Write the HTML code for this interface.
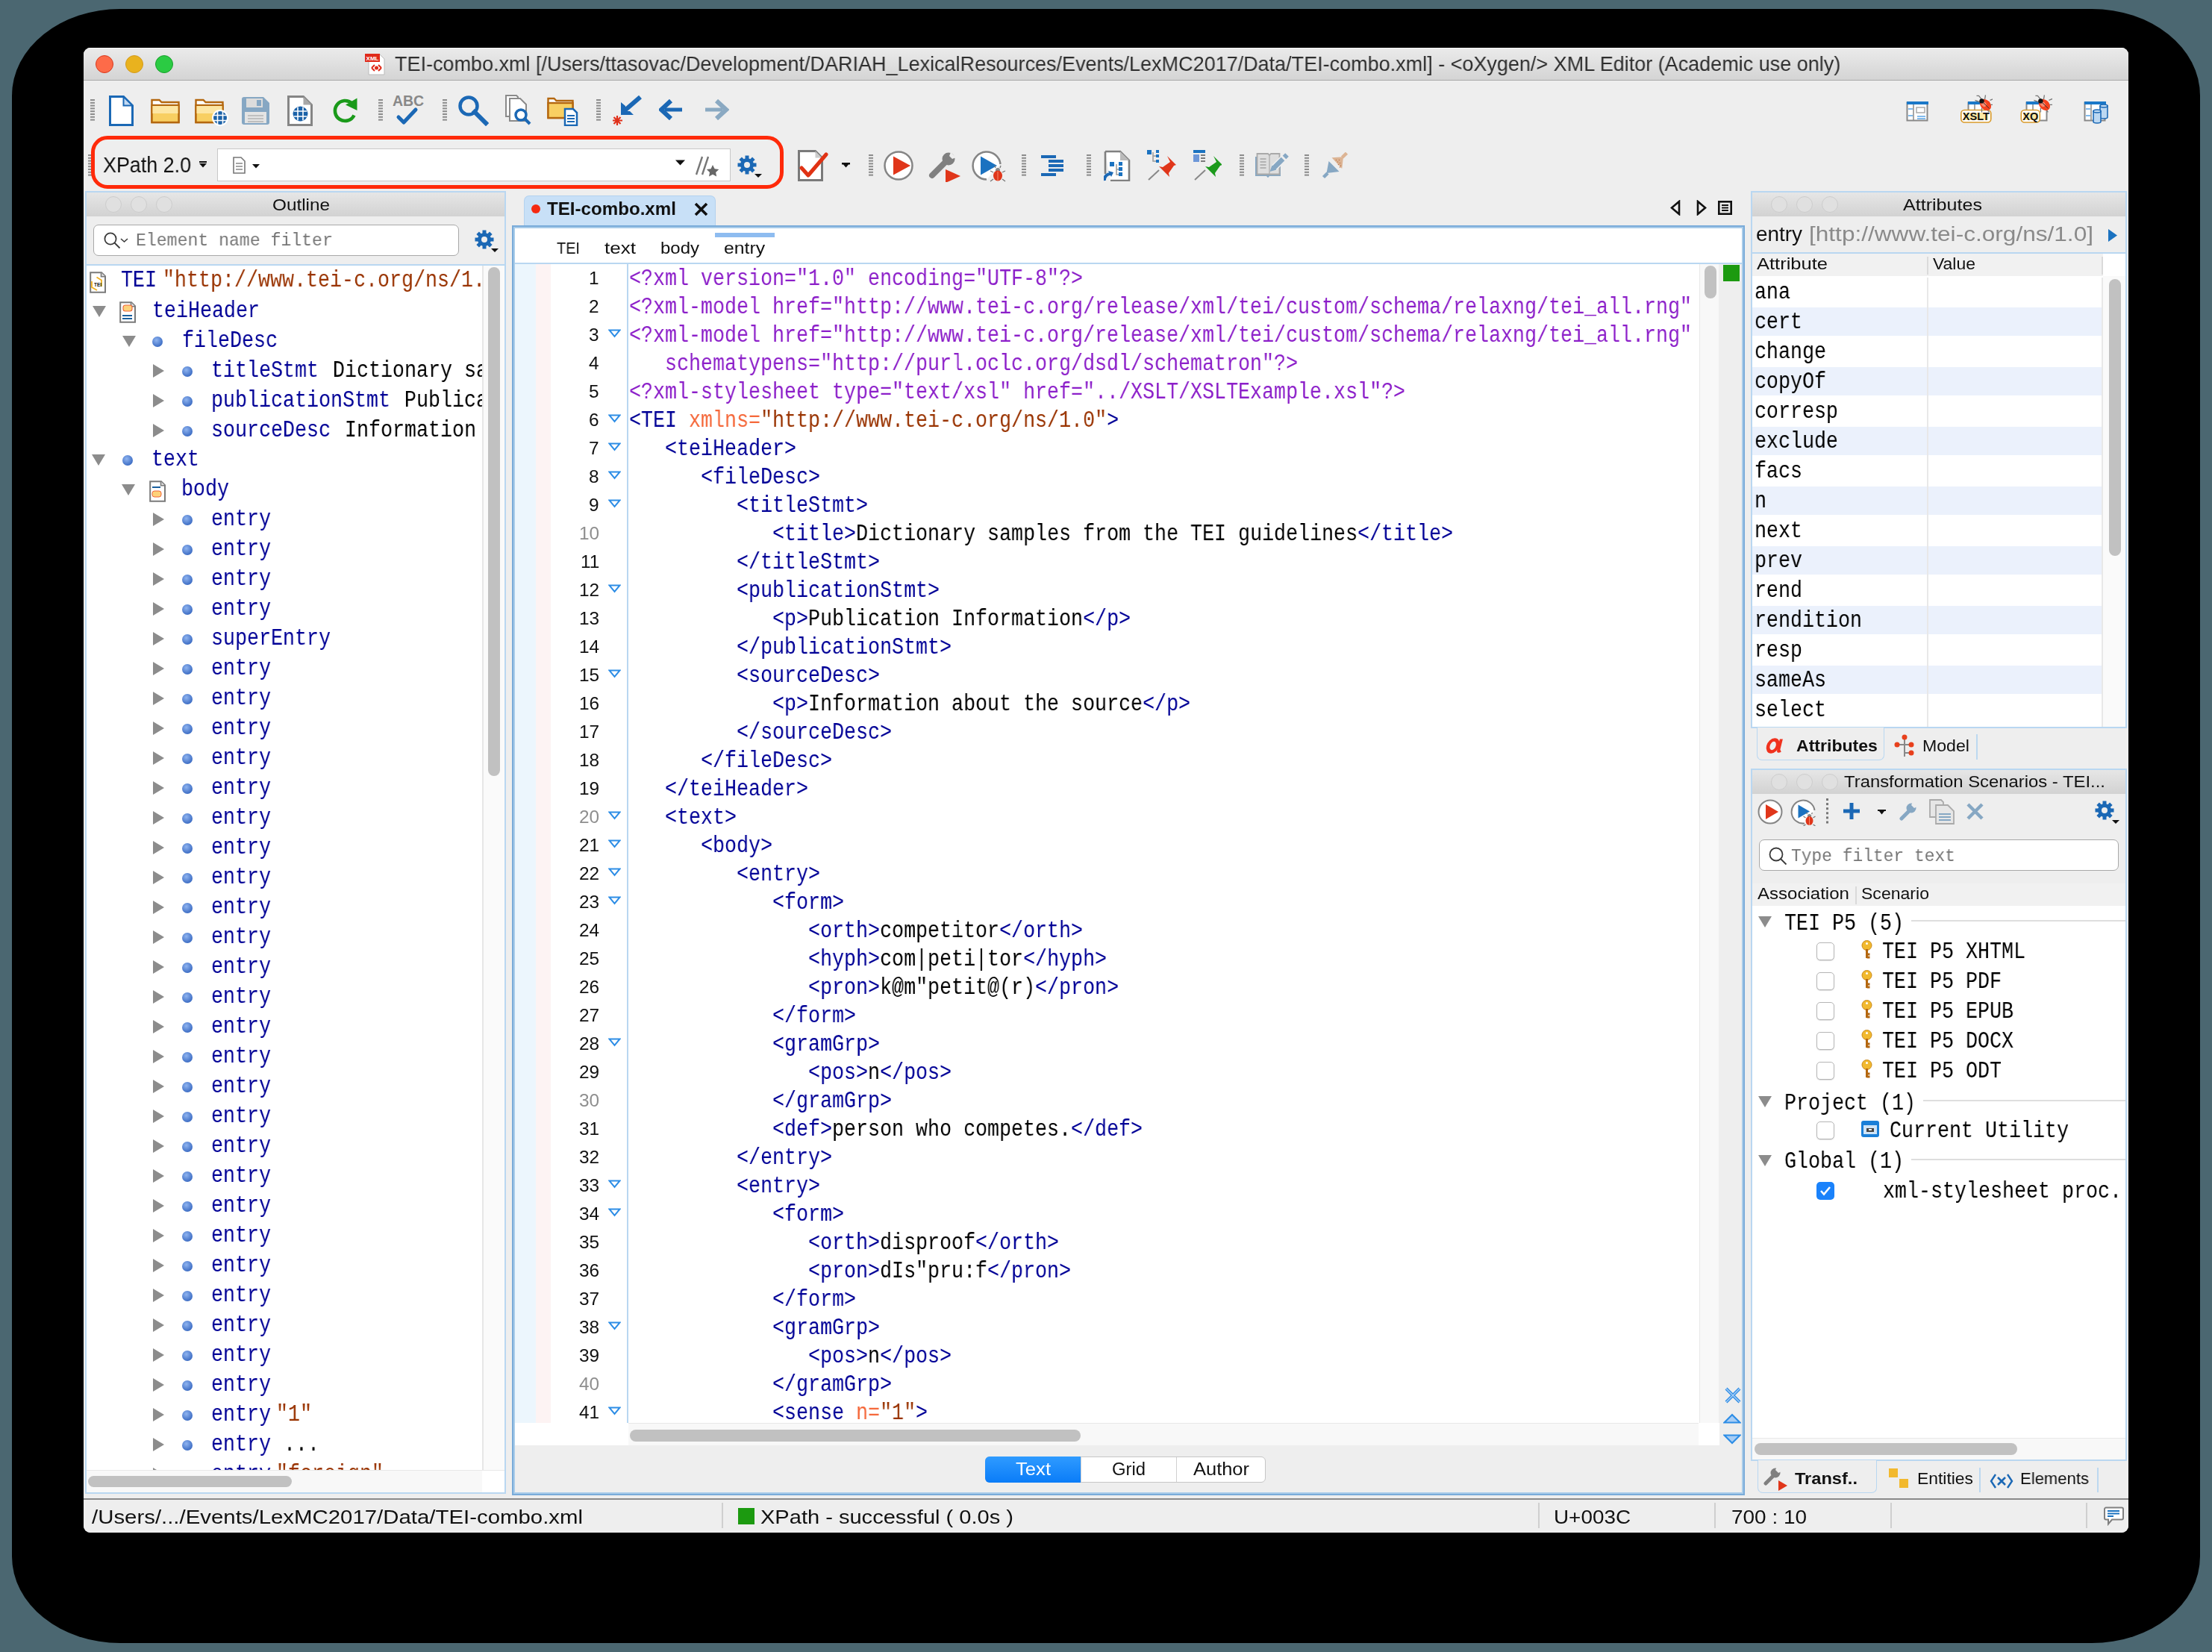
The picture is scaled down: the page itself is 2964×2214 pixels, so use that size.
<!DOCTYPE html><html><head><meta charset="utf-8"><title>oXygen XML Editor</title><style>
html,body{margin:0;padding:0}
body{width:2964px;height:2214px;overflow:hidden;position:relative;background:#4b6771;font-family:"Liberation Sans",sans-serif}
.r{position:absolute;box-sizing:border-box}
.t{position:absolute;white-space:pre;transform-origin:0 0;will-change:transform}
.clip{position:absolute;overflow:hidden}
</style></head><body>
<div class="r" style="left:16px;top:12px;width:2932px;height:2190px;background:#000;border-radius:145px/116px"></div>
<div style="position:absolute;left:0;top:0;width:2964px;height:2214px;clip-path:inset(64px 112px 160px 112px round 9px);background:#eeeeee">
<div class="r" style="left:112px;top:64px;width:2740px;height:44px;background:linear-gradient(#ebebeb,#d4d4d4);border-bottom:1.5px solid #a9a9a9;box-shadow:inset 0 1px 0 #f9f9f9"></div>
<div class="r" style="left:128px;top:74px;width:24px;height:24px;background:#fd6b49;border-radius:50%;border:1px solid #d9381c"></div>
<div class="r" style="left:168px;top:74px;width:24px;height:24px;background:#e9b21e;border-radius:50%;border:1px solid #d39a1c"></div>
<div class="r" style="left:208px;top:74px;width:24px;height:24px;background:#2bcb43;border-radius:50%;border:1px solid #17a02a"></div>
<svg class="r" style="left:487px;top:70px" width="32" height="32" viewBox="0 0 32 32"><path d="M7 3h15l6 6v21H7z" fill="#fff" stroke="#bbb"/><rect x="2" y="2" width="20" height="11" fill="#e02a1a"/><text x="12" y="10.5" font-size="8" font-family="Liberation Sans" font-weight="700" fill="#fff" text-anchor="middle">XML</text><path d="M11 21l4-4M11 21l4 4M24 21l-4-4M24 21l-4 4" stroke="#e02a1a" stroke-width="2"/><circle cx="17.5" cy="21" r="2.5" fill="#e02a1a"/></svg>
<div class="t" style="left:529.0px;top:72.3px;font:400 27.9px/27.9px 'Liberation Sans',sans-serif;color:#2e2e2e;transform:scaleX(0.9678);">TEI-combo.xml [/Users/ttasovac/Development/DARIAH_LexicalResources/Events/LexMC2017/Data/TEI-combo.xml] - &lt;oXygen/&gt; XML Editor (Academic use only)</div>
<svg class="r" style="left:121px;top:133px" width="6" height="33" viewBox="0 0 6 33"><rect x="0" y="0.0" width="6" height="2" fill="#8c8c8c"/><rect x="0" y="3.8" width="6" height="2" fill="#8c8c8c"/><rect x="0" y="7.6" width="6" height="2" fill="#8c8c8c"/><rect x="0" y="11.4" width="6" height="2" fill="#8c8c8c"/><rect x="0" y="15.2" width="6" height="2" fill="#8c8c8c"/><rect x="0" y="19.0" width="6" height="2" fill="#8c8c8c"/><rect x="0" y="22.8" width="6" height="2" fill="#8c8c8c"/><rect x="0" y="26.6" width="6" height="2" fill="#8c8c8c"/></svg>
<svg class="r" style="left:507px;top:133px" width="6" height="33" viewBox="0 0 6 33"><rect x="0" y="0.0" width="6" height="2" fill="#8c8c8c"/><rect x="0" y="3.8" width="6" height="2" fill="#8c8c8c"/><rect x="0" y="7.6" width="6" height="2" fill="#8c8c8c"/><rect x="0" y="11.4" width="6" height="2" fill="#8c8c8c"/><rect x="0" y="15.2" width="6" height="2" fill="#8c8c8c"/><rect x="0" y="19.0" width="6" height="2" fill="#8c8c8c"/><rect x="0" y="22.8" width="6" height="2" fill="#8c8c8c"/><rect x="0" y="26.6" width="6" height="2" fill="#8c8c8c"/></svg>
<svg class="r" style="left:593px;top:133px" width="6" height="33" viewBox="0 0 6 33"><rect x="0" y="0.0" width="6" height="2" fill="#8c8c8c"/><rect x="0" y="3.8" width="6" height="2" fill="#8c8c8c"/><rect x="0" y="7.6" width="6" height="2" fill="#8c8c8c"/><rect x="0" y="11.4" width="6" height="2" fill="#8c8c8c"/><rect x="0" y="15.2" width="6" height="2" fill="#8c8c8c"/><rect x="0" y="19.0" width="6" height="2" fill="#8c8c8c"/><rect x="0" y="22.8" width="6" height="2" fill="#8c8c8c"/><rect x="0" y="26.6" width="6" height="2" fill="#8c8c8c"/></svg>
<svg class="r" style="left:799px;top:133px" width="6" height="33" viewBox="0 0 6 33"><rect x="0" y="0.0" width="6" height="2" fill="#8c8c8c"/><rect x="0" y="3.8" width="6" height="2" fill="#8c8c8c"/><rect x="0" y="7.6" width="6" height="2" fill="#8c8c8c"/><rect x="0" y="11.4" width="6" height="2" fill="#8c8c8c"/><rect x="0" y="15.2" width="6" height="2" fill="#8c8c8c"/><rect x="0" y="19.0" width="6" height="2" fill="#8c8c8c"/><rect x="0" y="22.8" width="6" height="2" fill="#8c8c8c"/><rect x="0" y="26.6" width="6" height="2" fill="#8c8c8c"/></svg>
<svg class="r" style="left:146px;top:128px" width="33" height="41" viewBox="0 0 33 41"><path d="M1.5 1.5h18l12 12v26h-30z" fill="#fff" stroke="#1b68b5" stroke-width="3"/><path d="M19.5 1.5v12h12z" fill="#c2d9f2" stroke="#1b68b5" stroke-width="2"/></svg>
<svg class="r" style="left:202px;top:129px" width="41" height="37" viewBox="0 0 41 37"><path d="M1.5 5h10l3 3h23v27h-36z" fill="#fff" stroke="#b4670f" stroke-width="2.4"/><rect x="1.5" y="12" width="36" height="23" fill="#f8cf62" stroke="#b4670f" stroke-width="2.4"/><rect x="2.5" y="13" width="34" height="10" fill="#fde6a3"/></svg>
<svg class="r" style="left:261px;top:129px" width="46" height="41" viewBox="0 0 46 41"><path d="M1.5 5h10l3 3h23v27h-36z" fill="#fff" stroke="#b4670f" stroke-width="2.4"/><rect x="1.5" y="12" width="36" height="23" fill="#f8cf62" stroke="#b4670f" stroke-width="2.4"/><rect x="2.5" y="13" width="34" height="10" fill="#fde6a3"/><g transform="translate(34,29)"><circle cx="0" cy="0" r="10" fill="#1c62a8" stroke="#fff" stroke-width="2"/><path d="M-9-3.5h18M-9 3.5h18M-3.5-9v18M3.5-9v18" stroke="#fff" stroke-width="1.6"/></g></svg>
<svg class="r" style="left:324px;top:130px" width="37" height="37" viewBox="0 0 37 37"><path d="M0 3a3 3 0 0 1 3-3h26l8 8v26a3 3 0 0 1-3 3H3a3 3 0 0 1-3-3z" fill="#86a7c3"/><rect x="6" y="2" width="22" height="12" fill="#dcdcdc"/><rect x="20" y="4" width="6" height="8" fill="#86a7c3"/><rect x="4" y="20" width="29" height="15" fill="#e4e4e4"/><path d="M8 25h21M8 29h21M8 33h21" stroke="#9a9a9a" stroke-width="1"/></svg>
<svg class="r" style="left:385px;top:128px" width="34" height="41" viewBox="0 0 34 41"><path d="M1.5 1.5h20l11 11v27h-31z" fill="#fff" stroke="#858585" stroke-width="3"/><path d="M21.5 1.5v11h11z" fill="#a8a8a8"/><g transform="translate(17.5,24.5)"><circle cx="0" cy="0" r="10" fill="#1c62a8" stroke="none"/><path d="M-9-3.5h18M-9 3.5h18M-3.5-9v18M3.5-9v18" stroke="#fff" stroke-width="1.6"/></g></svg>
<svg class="r" style="left:444px;top:130px" width="36" height="36" viewBox="0 0 36 36"><path d="M30.5 24.5A13.5 13.5 0 1 1 27.5 8.5" fill="none" stroke="#1a9a1a" stroke-width="4.6"/><path d="M19 10.5L34.5 1.5v16.5z" fill="#1a9a1a"/></svg>
<svg class="r" style="left:525px;top:126px" width="45" height="43" viewBox="0 0 45 43"><text x="22" y="15.8" font-family="Liberation Sans" font-weight="700" font-size="19.5" fill="#888" text-anchor="middle">ABC</text><path d="M9 31l7 7 16-17" fill="none" stroke="#1b68b5" stroke-width="5" stroke-linecap="round" stroke-linejoin="round"/></svg>
<svg class="r" style="left:613px;top:127px" width="42" height="42" viewBox="0 0 42 42"><circle cx="15" cy="15" r="11.5" fill="none" stroke="#1b68b5" stroke-width="4.5"/><path d="M23 23l15 15" stroke="#1b68b5" stroke-width="6" stroke-linecap="square"/></svg>
<svg class="r" style="left:677px;top:127px" width="36" height="42" viewBox="0 0 36 42"><path d="M1 1h14l2 2v26H1z" fill="#fff" stroke="#8a8a8a" stroke-width="2"/><path d="M6 5h14l8 8v22H6z" fill="#fff" stroke="#8a8a8a" stroke-width="2"/><circle cx="21" cy="27" r="7" fill="#fff" stroke="#1b68b5" stroke-width="3.5"/><path d="M26 32l7 7" stroke="#1b68b5" stroke-width="4"/></svg>
<svg class="r" style="left:733px;top:129px" width="42" height="40" viewBox="0 0 42 40"><path d="M1.5 3h8l3 3h22v23h-33z" fill="#fff" stroke="#b4670f" stroke-width="2.4"/><rect x="1.5" y="9" width="33" height="20" fill="#f8cf62" stroke="#b4670f" stroke-width="2.4"/><path d="M24 17h11l5 5v17H24z" fill="#fff" stroke="#1b68b5" stroke-width="2.5"/><path d="M27 26h10M27 30h10M27 34h10" stroke="#1b68b5" stroke-width="2"/></svg>
<svg class="r" style="left:818px;top:127px" width="43" height="42" viewBox="0 0 43 42"><path d="M40 3L18 22" stroke="#1b68b5" stroke-width="6"/><path d="M14 10v17h17l-5-5H20v-7z" fill="#1b68b5"/><path d="M9 28v13M3 34.5h13M4.5 30l9 9M13.5 30l-9 9" stroke="#e0301a" stroke-width="2.2"/></svg>
<svg class="r" style="left:883px;top:133px" width="34" height="28" viewBox="0 0 34 28"><path d="M31 14H8" stroke="#1b68b5" stroke-width="5"/><path d="M16 2L3 14l13 12" fill="none" stroke="#1b68b5" stroke-width="6"/></svg>
<svg class="r" style="left:943px;top:133px" width="34" height="28" viewBox="0 0 34 28"><path d="M2 14h23" stroke="#8aa9c2" stroke-width="5"/><path d="M17 2l13 12-13 12" fill="none" stroke="#8aa9c2" stroke-width="6"/></svg>
<svg class="r" style="left:2554px;top:136px" width="31" height="27" viewBox="0 0 31 27"><rect x="1.5" y="1.5" width="27" height="24" fill="#fff" stroke="#888" stroke-width="2"/><rect x="1" y="0" width="29" height="4" fill="#1b78c8"/><path d="M10 4v21" stroke="#888" stroke-width="1.5"/><path d="M3 10h6M3 19h6M15 20h11M15 23h11" stroke="#5aa5e8" stroke-width="1.6"/><rect x="14" y="8" width="11" height="7" fill="none" stroke="#aaa" stroke-width="1.5"/></svg>
<svg class="r" style="left:2627px;top:126px" width="43" height="40" viewBox="0 0 43 40"><g transform="translate(9,10)"><rect x="1.5" y="1.5" width="27" height="24" fill="#fff" stroke="#888" stroke-width="2"/><rect x="1" y="0" width="29" height="4" fill="#1b78c8"/><path d="M10 4v21" stroke="#888" stroke-width="1.5"/></g><rect x="0.8" y="21.5" width="40" height="16.5" rx="4.5" fill="#fff" stroke="#d99a2a" stroke-width="1.6"/><rect x="4" y="25" width="33" height="10" fill="#fde9a4"/><text x="20.8" y="35" font-family="Liberation Sans" font-weight="700" font-size="14.5" text-anchor="middle" fill="#111">XSLT</text><g transform="translate(32.5,13.4)"><path d="M-3-5l-5-6-3 0M0-6l1-6M-5-2l-8-3M4 1l8 0M2 6l4 5M-4 5l0 6M7-5l5-2" stroke="#777" stroke-width="1.3" fill="none"/><ellipse cx="1" cy="1" rx="6.5" ry="8.5" transform="rotate(-45 1 1)" fill="#f4421e"/><ellipse cx="-1" cy="-1" rx="3" ry="4" transform="rotate(-45)" fill="#f98a70"/><circle cx="-4" cy="-4" r="3.2" fill="#111"/><path d="M-3-3l9 9" stroke="#333" stroke-width="1"/></g></svg>
<svg class="r" style="left:2707px;top:126px" width="43" height="40" viewBox="0 0 43 40"><g transform="translate(7,10)"><rect x="1.5" y="1.5" width="27" height="24" fill="#fff" stroke="#888" stroke-width="2"/><rect x="1" y="0" width="29" height="4" fill="#1b78c8"/><path d="M10 4v21" stroke="#888" stroke-width="1.5"/></g><rect x="1.3" y="21.5" width="25" height="16.5" rx="4.5" fill="#fff" stroke="#d99a2a" stroke-width="1.6"/><rect x="4" y="25" width="20" height="10" fill="#fde9a4"/><text x="13.8" y="35" font-family="Liberation Sans" font-weight="700" font-size="14.5" text-anchor="middle" fill="#111">XQ</text><g transform="translate(31.4,13.4)"><path d="M-3-5l-5-6-3 0M0-6l1-6M-5-2l-8-3M4 1l8 0M2 6l4 5M-4 5l0 6M7-5l5-2" stroke="#777" stroke-width="1.3" fill="none"/><ellipse cx="1" cy="1" rx="6.5" ry="8.5" transform="rotate(-45 1 1)" fill="#f4421e"/><ellipse cx="-1" cy="-1" rx="3" ry="4" transform="rotate(-45)" fill="#f98a70"/><circle cx="-4" cy="-4" r="3.2" fill="#111"/><path d="M-3-3l9 9" stroke="#333" stroke-width="1"/></g></svg>
<svg class="r" style="left:2792px;top:136px" width="34" height="30" viewBox="0 0 34 30"><rect x="1.5" y="1.5" width="27" height="24" fill="#fff" stroke="#888" stroke-width="2"/><rect x="1" y="0" width="29" height="4" fill="#1b78c8"/><path d="M10 4v21" stroke="#888" stroke-width="1.5"/><path d="M3 10h6M3 19h6" stroke="#5aa5e8" stroke-width="1.6"/><g fill="#bcd8f2" stroke="#1b68b5" stroke-width="1.6"><path d="M22 6h10v15a5 2 0 0 1-10 0z"/><ellipse cx="27" cy="6" rx="5" ry="2"/><path d="M13 13h10v14a5 2 0 0 1-10 0z"/><ellipse cx="18" cy="13" rx="5" ry="2"/></g></svg>
<svg class="r" style="left:118px;top:207px" width="6" height="33" viewBox="0 0 6 33"><rect x="0" y="0.0" width="6" height="2" fill="#8c8c8c"/><rect x="0" y="3.8" width="6" height="2" fill="#8c8c8c"/><rect x="0" y="7.6" width="6" height="2" fill="#8c8c8c"/><rect x="0" y="11.4" width="6" height="2" fill="#8c8c8c"/><rect x="0" y="15.2" width="6" height="2" fill="#8c8c8c"/><rect x="0" y="19.0" width="6" height="2" fill="#8c8c8c"/><rect x="0" y="22.8" width="6" height="2" fill="#8c8c8c"/><rect x="0" y="26.6" width="6" height="2" fill="#8c8c8c"/></svg>
<div class="r" style="left:122px;top:182px;width:928px;height:71px;background:transparent;border:5px solid #ff2a0a;border-radius:22px"></div>
<div class="t" style="left:138.0px;top:205.9px;font:400 29.5px/29.5px 'Liberation Sans',sans-serif;color:#111;transform:scaleX(0.9107);">XPath 2.0</div>
<svg class="r" style="left:266px;top:216px" width="14" height="11" viewBox="0 0 14 11"><path d="M1 0h10v2H1zM1 3h10l-5 5.5z" fill="#111"/></svg>
<div class="r" style="left:291px;top:199px;width:688px;height:44px;background:#fff;border:1.5px solid #c8c8c8"></div>
<svg class="r" style="left:311px;top:209px" width="40" height="26" viewBox="0 0 40 26"><path d="M2 2h10l5 5v16H2z" fill="#fff" stroke="#777" stroke-width="1.6"/><path d="M5 10h9M5 14h9M5 18h9" stroke="#888" stroke-width="1.3"/><path d="M27 11h10l-5 5.5z" fill="#111"/></svg>
<svg class="r" style="left:904px;top:213px" width="16" height="12" viewBox="0 0 16 12"><path d="M1 1.5h13l-6.5 7z" fill="#111"/></svg>
<svg class="r" style="left:931px;top:206px" width="34" height="32" viewBox="0 0 34 32"><path d="M10 4L2 28M18 4l-8 24" stroke="#777" stroke-width="2.4"/><path d="M24 15l2.6 5.3 5.7.7-4.2 3.9 1.1 5.6-5.2-2.8-5 2.8 1-5.6-4.1-3.9 5.7-.7z" fill="#666"/></svg>
<svg class="r" style="left:988px;top:208px" width="36" height="32" viewBox="0 0 36 32"><g fill="#1b68b5"><circle cx="13" cy="13" r="9"/><rect x="10.5" y="0.5" width="5" height="6" transform="rotate(0 13 13)"/><rect x="10.5" y="0.5" width="5" height="6" transform="rotate(45 13 13)"/><rect x="10.5" y="0.5" width="5" height="6" transform="rotate(90 13 13)"/><rect x="10.5" y="0.5" width="5" height="6" transform="rotate(135 13 13)"/><rect x="10.5" y="0.5" width="5" height="6" transform="rotate(180 13 13)"/><rect x="10.5" y="0.5" width="5" height="6" transform="rotate(225 13 13)"/><rect x="10.5" y="0.5" width="5" height="6" transform="rotate(270 13 13)"/><rect x="10.5" y="0.5" width="5" height="6" transform="rotate(315 13 13)"/></g><circle cx="13" cy="13" r="4" fill="#eeeeee"/><path d="M23 25h10l-5 5z" fill="#111"/></svg>
<svg class="r" style="left:1069px;top:201px" width="41" height="42" viewBox="0 0 41 42"><path d="M1.5 1.5h22l9 9v30h-31z" fill="#fff" stroke="#7a7a7a" stroke-width="3"/><path d="M23.5 1.5v9h9z" fill="#ccc"/><path d="M5 24l9 10 24-28" fill="none" stroke="#e03214" stroke-width="5" stroke-linecap="round" stroke-linejoin="round"/></svg>
<svg class="r" style="left:1128px;top:218px" width="12" height="8" viewBox="0 0 12 8"><path d="M0 0h11v2.5h-2l-3.5 4-3.5-4H0z" fill="#111"/></svg>
<svg class="r" style="left:1164px;top:207px" width="6" height="33" viewBox="0 0 6 33"><rect x="0" y="0.0" width="6" height="2" fill="#8c8c8c"/><rect x="0" y="3.8" width="6" height="2" fill="#8c8c8c"/><rect x="0" y="7.6" width="6" height="2" fill="#8c8c8c"/><rect x="0" y="11.4" width="6" height="2" fill="#8c8c8c"/><rect x="0" y="15.2" width="6" height="2" fill="#8c8c8c"/><rect x="0" y="19.0" width="6" height="2" fill="#8c8c8c"/><rect x="0" y="22.8" width="6" height="2" fill="#8c8c8c"/><rect x="0" y="26.6" width="6" height="2" fill="#8c8c8c"/></svg>
<svg class="r" style="left:1369px;top:207px" width="6" height="33" viewBox="0 0 6 33"><rect x="0" y="0.0" width="6" height="2" fill="#8c8c8c"/><rect x="0" y="3.8" width="6" height="2" fill="#8c8c8c"/><rect x="0" y="7.6" width="6" height="2" fill="#8c8c8c"/><rect x="0" y="11.4" width="6" height="2" fill="#8c8c8c"/><rect x="0" y="15.2" width="6" height="2" fill="#8c8c8c"/><rect x="0" y="19.0" width="6" height="2" fill="#8c8c8c"/><rect x="0" y="22.8" width="6" height="2" fill="#8c8c8c"/><rect x="0" y="26.6" width="6" height="2" fill="#8c8c8c"/></svg>
<svg class="r" style="left:1456px;top:207px" width="6" height="33" viewBox="0 0 6 33"><rect x="0" y="0.0" width="6" height="2" fill="#8c8c8c"/><rect x="0" y="3.8" width="6" height="2" fill="#8c8c8c"/><rect x="0" y="7.6" width="6" height="2" fill="#8c8c8c"/><rect x="0" y="11.4" width="6" height="2" fill="#8c8c8c"/><rect x="0" y="15.2" width="6" height="2" fill="#8c8c8c"/><rect x="0" y="19.0" width="6" height="2" fill="#8c8c8c"/><rect x="0" y="22.8" width="6" height="2" fill="#8c8c8c"/><rect x="0" y="26.6" width="6" height="2" fill="#8c8c8c"/></svg>
<svg class="r" style="left:1661px;top:207px" width="6" height="33" viewBox="0 0 6 33"><rect x="0" y="0.0" width="6" height="2" fill="#8c8c8c"/><rect x="0" y="3.8" width="6" height="2" fill="#8c8c8c"/><rect x="0" y="7.6" width="6" height="2" fill="#8c8c8c"/><rect x="0" y="11.4" width="6" height="2" fill="#8c8c8c"/><rect x="0" y="15.2" width="6" height="2" fill="#8c8c8c"/><rect x="0" y="19.0" width="6" height="2" fill="#8c8c8c"/><rect x="0" y="22.8" width="6" height="2" fill="#8c8c8c"/><rect x="0" y="26.6" width="6" height="2" fill="#8c8c8c"/></svg>
<svg class="r" style="left:1748px;top:207px" width="6" height="33" viewBox="0 0 6 33"><rect x="0" y="0.0" width="6" height="2" fill="#8c8c8c"/><rect x="0" y="3.8" width="6" height="2" fill="#8c8c8c"/><rect x="0" y="7.6" width="6" height="2" fill="#8c8c8c"/><rect x="0" y="11.4" width="6" height="2" fill="#8c8c8c"/><rect x="0" y="15.2" width="6" height="2" fill="#8c8c8c"/><rect x="0" y="19.0" width="6" height="2" fill="#8c8c8c"/><rect x="0" y="22.8" width="6" height="2" fill="#8c8c8c"/><rect x="0" y="26.6" width="6" height="2" fill="#8c8c8c"/></svg>
<svg class="r" style="left:1184px;top:202px" width="41" height="41" viewBox="0 0 41 41"><circle cx="20" cy="20" r="18.5" fill="#fff" stroke="#858585" stroke-width="2.5"/><path d="M13 7.5l23 12.5-23 12.5z" fill="#e0361a"/></svg>
<svg class="r" style="left:1244px;top:202px" width="43" height="42" viewBox="0 0 43 42"><path d="M5 33L24 14" stroke="#808080" stroke-width="8" stroke-linecap="round"/><circle cx="27" cy="11" r="8.5" fill="#808080"/><path d="M30 2l7 7-5 2-4-4z" fill="#eeeeee"/><path d="M23 25l20 9-20 9z" fill="#e0361a"/></svg>
<svg class="r" style="left:1302px;top:202px" width="46" height="42" viewBox="0 0 46 42"><path d="M20 38.5A18.5 18.5 0 1 1 38.5 18" fill="#fff" stroke="#858585" stroke-width="2.5"/><path d="M12 7.5l22 12.5-22 12.5z" fill="#1b72c0"/><g transform="translate(35,32)"><circle cx="0" cy="-6" r="3" fill="#888"/><ellipse cx="0" cy="1.5" rx="6" ry="7" fill="#e0361a"/><path d="M0-4v12" stroke="#f58a6a" stroke-width="1"/><path d="M-3-9l-1-3M3-9l1-3M-6-3l-4-2M6-3l4-2M-6 6l-4 3M6 6l4 3" stroke="#777" stroke-width="1.3"/></g></svg>
<svg class="r" style="left:1395px;top:208px" width="32" height="28" viewBox="0 0 32 28"><g fill="#1b68b5"><rect x="0" y="0" width="20" height="4"/><rect x="10" y="6" width="20" height="4"/><rect x="10" y="12" width="20" height="4"/><rect x="10" y="18" width="20" height="4"/><rect x="0" y="24" width="20" height="4"/></g></svg>
<svg class="r" style="left:1479px;top:201px" width="37" height="42" viewBox="0 0 37 42"><path d="M2 2h20l12 12v27H9" fill="#fff" stroke="#808080" stroke-width="2.6"/><path d="M22 2v12h12z" fill="#bbb"/><path d="M2 2v30" stroke="#808080" stroke-width="2.6"/><rect x="8" y="16" width="6" height="6" fill="#1b72c0"/><rect x="20" y="16" width="5" height="5" fill="#1b72c0"/><rect x="20" y="23" width="5" height="5" fill="#1b72c0"/><rect x="20" y="30" width="5" height="5" fill="#1b72c0"/><path d="M17 19v14h3M17 26h3" stroke="#999" stroke-width="1.5" fill="none"/><path d="M1 41a8 8 0 0 1 9-9" stroke="#1b68b5" stroke-width="4" fill="none"/><path d="M6 28l7 2-3 6z" fill="#1b68b5"/></svg>
<svg class="r" style="left:1537px;top:201px" width="40" height="42" viewBox="0 0 40 42"><rect x="0" y="0" width="6" height="6" fill="#1b72c0"/><rect x="12" y="0" width="4" height="4" fill="#1b72c0"/><rect x="12" y="6" width="4" height="4" fill="#1b72c0"/><rect x="12" y="13" width="4" height="4" fill="#1b72c0"/><path d="M8 3v12h4M8 8h4" stroke="#999" stroke-width="1.5" fill="none"/><path d="M2 40l14-13" stroke="#888" stroke-width="2"/><path d="M27 8l12 12-3 1-7 10 1 5-14-14 5 1 10-7z" fill="#e0361a"/></svg>
<svg class="r" style="left:1599px;top:201px" width="38" height="42" viewBox="0 0 38 42"><rect x="0" y="0" width="16" height="4" fill="#1b72c0"/><rect x="0" y="6" width="8" height="10" fill="#6d97d8"/><path d="M10 7h6M10 11h6M10 15h6" stroke="#555" stroke-width="1.5"/><path d="M2 40l14-13" stroke="#888" stroke-width="2"/><path d="M27 8l12 12-3 1-7 10 1 5-14-14 5 1 10-7z" fill="#1c9a1c"/></svg>
<svg class="r" style="left:1682px;top:204px" width="45" height="36" viewBox="0 0 45 36"><path d="M0 6h34v26H19l-2 2.2-2-2.2H0z" fill="#86a7c3"/><path d="M2.5 2h14.5l2 2.2 2-2.2h11.5v27.5h-30z" fill="#dedede" stroke="#a9a9a9" stroke-width="1.8"/><path d="M19 4v25" stroke="#b5b5b5" stroke-width="1.6"/><path d="M6.5 9h8M6.5 13h8M6.5 17h8M6.5 21h8" stroke="#a5a5a5" stroke-width="1.3"/><path d="M24.5 21.5L37 9" stroke="#eeeeee" stroke-width="9.5"/><path d="M24.5 21.5L37 9" stroke="#86a7c3" stroke-width="6.5"/><path d="M19.5 26l3-8.5 6 6z" fill="#86a7c3"/><path d="M39 7l3.5-3.5" stroke="#86a7c3" stroke-width="6.5"/></svg>
<svg class="r" style="left:1771px;top:204px" width="36" height="36" viewBox="0 0 36 36"><path d="M13.5 7.2L29 6.2 27.2 22z" fill="#dcb494"/><path d="M27.5 7L33.5 1.2" stroke="#dcb494" stroke-width="4.5"/><g fill="#c0794e"><circle cx="19.5" cy="10.5" r=".8"/><circle cx="23.5" cy="10.5" r=".8"/><circle cx="21.5" cy="13" r=".8"/><circle cx="24.5" cy="14.5" r=".8"/><circle cx="22.5" cy="16.5" r=".8"/><circle cx="25.5" cy="18" r=".8"/><circle cx="24.5" cy="20" r=".8"/></g><path d="M9.5 12L6.5 28 23.5 26z" fill="#86a7c3"/><path d="M8 28L2.5 33.5" stroke="#86a7c3" stroke-width="4.5"/></svg>
<div class="r" style="left:114px;top:256px;width:564px;height:1746px;background:#fff;border:2px solid #b9d7f1"></div>
<div class="r" style="left:116px;top:258px;width:560px;height:32px;background:linear-gradient(#e6e6e6,#d2d2d2);"></div>
<div class="r" style="left:140.5px;top:263px;width:22px;height:22px;background:#e0e0e0;border-radius:50%;border:1.5px solid #cdcdcd"></div>
<div class="r" style="left:174.5px;top:263px;width:22px;height:22px;background:#e0e0e0;border-radius:50%;border:1.5px solid #cdcdcd"></div>
<div class="r" style="left:208.5px;top:263px;width:22px;height:22px;background:#e0e0e0;border-radius:50%;border:1.5px solid #cdcdcd"></div>
<div class="t" style="left:364.5px;top:264.1px;font:400 22.5px/22.5px 'Liberation Sans',sans-serif;color:#111;transform:scaleX(1.0801);">Outline</div>
<div class="r" style="left:116px;top:290px;width:560px;height:64px;background:#eeeeee;"></div>
<div class="r" style="left:116px;top:354px;width:560px;height:2px;background:#b9d7f1;"></div>
<div class="r" style="left:125px;top:301px;width:490px;height:42px;background:#fff;border:1.5px solid #a8a8a8;border-radius:7px"></div>
<svg class="r" style="left:139px;top:311px" width="36" height="26" viewBox="0 0 36 26"><circle cx="9" cy="9" r="7.6" fill="none" stroke="#3a3a3a" stroke-width="1.8"/><path d="M14.5 14.5l7 7" stroke="#3a3a3a" stroke-width="1.8"/><path d="M23 9l4.5 4 4.5-4" fill="none" stroke="#3a3a3a" stroke-width="1.6"/></svg>
<div class="t" style="left:182.0px;top:311.8px;font:400 23.4px/23.4px 'Liberation Mono',monospace;color:#767676;transform:scaleX(0.9895);">Element name filter</div>
<svg class="r" style="left:636px;top:308px" width="34" height="32" viewBox="0 0 34 32"><g fill="#1b68b5"><circle cx="13" cy="13" r="9"/><rect x="10.5" y="0.5" width="5" height="6" transform="rotate(0 13 13)"/><rect x="10.5" y="0.5" width="5" height="6" transform="rotate(45 13 13)"/><rect x="10.5" y="0.5" width="5" height="6" transform="rotate(90 13 13)"/><rect x="10.5" y="0.5" width="5" height="6" transform="rotate(135 13 13)"/><rect x="10.5" y="0.5" width="5" height="6" transform="rotate(180 13 13)"/><rect x="10.5" y="0.5" width="5" height="6" transform="rotate(225 13 13)"/><rect x="10.5" y="0.5" width="5" height="6" transform="rotate(270 13 13)"/><rect x="10.5" y="0.5" width="5" height="6" transform="rotate(315 13 13)"/></g><circle cx="13" cy="13" r="4" fill="#eeeeee"/><path d="M22 25h10l-5 5z" fill="#111"/></svg>
<div class="clip" style="left:116px;top:356px;width:530px;height:1614px">
<svg width="0" height="0" style="position:absolute"><defs><radialGradient id="dg" cx="40%" cy="35%" r="65%"><stop offset="0" stop-color="#8fb4f0"/><stop offset="1" stop-color="#3d6dc4"/></radialGradient></defs></svg>
<svg class="r" style="left:4px;top:8px" width="23" height="30" viewBox="0 0 23 30"><path d="M1.2 1.2h14.8l5 5v21.6H1.2z" fill="#fff" stroke="#7a7a7a" stroke-width="2"/><path d="M15.5 1.2v5.5h5.5" fill="#ddd" stroke="#7a7a7a" stroke-width="1.6"/><path d="M9.5 7.5l6.5 4v8.5M3 13v8l7 4" fill="none" stroke="#f0b020" stroke-width="1.8"/><text x="11" y="19.5" font-size="6.5" font-weight="700" font-family="Liberation Sans" text-anchor="middle" fill="#111">TEI</text></svg>
<div class="t" style="left:46px;top:4.2px;font:400 31px/31px 'Liberation Mono',monospace;transform:scaleX(0.8601);"><span style="color:#000096">TEI</span></div>
<div class="t" style="left:101.5px;top:4.2px;font:400 31px/31px 'Liberation Mono',monospace;transform:scaleX(0.8601);"><span style="color:#993300">&quot;http://www.tei-c.org/ns/1.0&quot;</span></div>
<svg class="r" style="left:8px;top:54px" width="18" height="15" viewBox="0 0 18 15"><path d="M0 0h18L9 15z" fill="#8c8c8c"/></svg>
<svg class="r" style="left:44px;top:48px" width="23" height="30" viewBox="0 0 23 30"><path d="M1.2 1.2h14.8l5 5v21.6H1.2z" fill="#fff" stroke="#7a7a7a" stroke-width="2"/><path d="M15.5 1.2v5.5h5.5" fill="#ddd" stroke="#7a7a7a" stroke-width="1.6"/><rect x="5" y="5" width="12" height="8" rx="3" fill="#fdd27a" stroke="#f0643a" stroke-width="1.1"/><path d="M4 19h13M4 23h13" stroke="#1a5f9e" stroke-width="2"/></svg>
<div class="t" style="left:88px;top:45.2px;font:400 31px/31px 'Liberation Mono',monospace;transform:scaleX(0.8601);"><span style="color:#000096">teiHeader</span></div>
<svg class="r" style="left:48px;top:94px" width="18" height="15" viewBox="0 0 18 15"><path d="M0 0h18L9 15z" fill="#8c8c8c"/></svg>
<svg class="r" style="left:88px;top:95px" width="14" height="14" viewBox="0 0 14 14"><circle cx="7" cy="7" r="7" fill="url(#dg)"/></svg>
<div class="t" style="left:128px;top:85.2px;font:400 31px/31px 'Liberation Mono',monospace;transform:scaleX(0.8601);"><span style="color:#000096">fileDesc</span></div>
<svg class="r" style="left:89px;top:132px" width="15" height="18" viewBox="0 0 15 18"><path d="M0 0L15 9 0 18z" fill="#8c8c8c"/></svg>
<svg class="r" style="left:128px;top:135px" width="14" height="14" viewBox="0 0 14 14"><circle cx="7" cy="7" r="7" fill="url(#dg)"/></svg>
<div class="t" style="left:167px;top:125.2px;font:400 31px/31px 'Liberation Mono',monospace;transform:scaleX(0.8601);"><span style="color:#000096">titleStmt</span></div>
<div class="t" style="left:314px;top:125.2px;font:400 31px/31px 'Liberation Mono',monospace;transform:scaleX(0.8601);"><span style="color:#000000"> Dictionary samples from the TEI guidelines</span></div>
<svg class="r" style="left:89px;top:172px" width="15" height="18" viewBox="0 0 15 18"><path d="M0 0L15 9 0 18z" fill="#8c8c8c"/></svg>
<svg class="r" style="left:128px;top:175px" width="14" height="14" viewBox="0 0 14 14"><circle cx="7" cy="7" r="7" fill="url(#dg)"/></svg>
<div class="t" style="left:167px;top:165.2px;font:400 31px/31px 'Liberation Mono',monospace;transform:scaleX(0.8601);"><span style="color:#000096">publicationStmt</span></div>
<div class="t" style="left:410px;top:165.2px;font:400 31px/31px 'Liberation Mono',monospace;transform:scaleX(0.8601);"><span style="color:#000000"> Publication Information</span></div>
<svg class="r" style="left:89px;top:212px" width="15" height="18" viewBox="0 0 15 18"><path d="M0 0L15 9 0 18z" fill="#8c8c8c"/></svg>
<svg class="r" style="left:128px;top:215px" width="14" height="14" viewBox="0 0 14 14"><circle cx="7" cy="7" r="7" fill="url(#dg)"/></svg>
<div class="t" style="left:167px;top:205.2px;font:400 31px/31px 'Liberation Mono',monospace;transform:scaleX(0.8601);"><span style="color:#000096">sourceDesc</span></div>
<div class="t" style="left:330px;top:205.2px;font:400 31px/31px 'Liberation Mono',monospace;transform:scaleX(0.8601);"><span style="color:#000000"> Information about the source</span></div>
<svg class="r" style="left:7px;top:253px" width="18" height="15" viewBox="0 0 18 15"><path d="M0 0h18L9 15z" fill="#8c8c8c"/></svg>
<svg class="r" style="left:48px;top:254px" width="14" height="14" viewBox="0 0 14 14"><circle cx="7" cy="7" r="7" fill="url(#dg)"/></svg>
<div class="t" style="left:87px;top:244.2px;font:400 31px/31px 'Liberation Mono',monospace;transform:scaleX(0.8601);"><span style="color:#000096">text</span></div>
<svg class="r" style="left:47px;top:293px" width="18" height="15" viewBox="0 0 18 15"><path d="M0 0h18L9 15z" fill="#8c8c8c"/></svg>
<svg class="r" style="left:84px;top:288px" width="23" height="30" viewBox="0 0 23 30"><path d="M1.2 1.2h14.8l5 5v21.6H1.2z" fill="#fff" stroke="#7a7a7a" stroke-width="2"/><path d="M15.5 1.2v5.5h5.5" fill="#ddd" stroke="#7a7a7a" stroke-width="1.6"/><path d="M4 9h11" stroke="#1a5f9e" stroke-width="2"/><rect x="4" y="14" width="12" height="8" rx="3" fill="#fdd27a" stroke="#f0643a" stroke-width="1"/></svg>
<div class="t" style="left:127px;top:284.2px;font:400 31px/31px 'Liberation Mono',monospace;transform:scaleX(0.8601);"><span style="color:#000096">body</span></div>
<svg class="r" style="left:89px;top:331px" width="15" height="18" viewBox="0 0 15 18"><path d="M0 0L15 9 0 18z" fill="#8c8c8c"/></svg>
<svg class="r" style="left:128px;top:334px" width="14" height="14" viewBox="0 0 14 14"><circle cx="7" cy="7" r="7" fill="url(#dg)"/></svg>
<div class="t" style="left:167px;top:324.2px;font:400 31px/31px 'Liberation Mono',monospace;transform:scaleX(0.8601);"><span style="color:#000096">entry</span></div>
<svg class="r" style="left:89px;top:371px" width="15" height="18" viewBox="0 0 15 18"><path d="M0 0L15 9 0 18z" fill="#8c8c8c"/></svg>
<svg class="r" style="left:128px;top:374px" width="14" height="14" viewBox="0 0 14 14"><circle cx="7" cy="7" r="7" fill="url(#dg)"/></svg>
<div class="t" style="left:167px;top:364.2px;font:400 31px/31px 'Liberation Mono',monospace;transform:scaleX(0.8601);"><span style="color:#000096">entry</span></div>
<svg class="r" style="left:89px;top:411px" width="15" height="18" viewBox="0 0 15 18"><path d="M0 0L15 9 0 18z" fill="#8c8c8c"/></svg>
<svg class="r" style="left:128px;top:414px" width="14" height="14" viewBox="0 0 14 14"><circle cx="7" cy="7" r="7" fill="url(#dg)"/></svg>
<div class="t" style="left:167px;top:404.2px;font:400 31px/31px 'Liberation Mono',monospace;transform:scaleX(0.8601);"><span style="color:#000096">entry</span></div>
<svg class="r" style="left:89px;top:451px" width="15" height="18" viewBox="0 0 15 18"><path d="M0 0L15 9 0 18z" fill="#8c8c8c"/></svg>
<svg class="r" style="left:128px;top:454px" width="14" height="14" viewBox="0 0 14 14"><circle cx="7" cy="7" r="7" fill="url(#dg)"/></svg>
<div class="t" style="left:167px;top:444.2px;font:400 31px/31px 'Liberation Mono',monospace;transform:scaleX(0.8601);"><span style="color:#000096">entry</span></div>
<svg class="r" style="left:89px;top:491px" width="15" height="18" viewBox="0 0 15 18"><path d="M0 0L15 9 0 18z" fill="#8c8c8c"/></svg>
<svg class="r" style="left:128px;top:494px" width="14" height="14" viewBox="0 0 14 14"><circle cx="7" cy="7" r="7" fill="url(#dg)"/></svg>
<div class="t" style="left:167px;top:484.2px;font:400 31px/31px 'Liberation Mono',monospace;transform:scaleX(0.8601);"><span style="color:#000096">superEntry</span></div>
<svg class="r" style="left:89px;top:531px" width="15" height="18" viewBox="0 0 15 18"><path d="M0 0L15 9 0 18z" fill="#8c8c8c"/></svg>
<svg class="r" style="left:128px;top:534px" width="14" height="14" viewBox="0 0 14 14"><circle cx="7" cy="7" r="7" fill="url(#dg)"/></svg>
<div class="t" style="left:167px;top:524.2px;font:400 31px/31px 'Liberation Mono',monospace;transform:scaleX(0.8601);"><span style="color:#000096">entry</span></div>
<svg class="r" style="left:89px;top:571px" width="15" height="18" viewBox="0 0 15 18"><path d="M0 0L15 9 0 18z" fill="#8c8c8c"/></svg>
<svg class="r" style="left:128px;top:574px" width="14" height="14" viewBox="0 0 14 14"><circle cx="7" cy="7" r="7" fill="url(#dg)"/></svg>
<div class="t" style="left:167px;top:564.2px;font:400 31px/31px 'Liberation Mono',monospace;transform:scaleX(0.8601);"><span style="color:#000096">entry</span></div>
<svg class="r" style="left:89px;top:611px" width="15" height="18" viewBox="0 0 15 18"><path d="M0 0L15 9 0 18z" fill="#8c8c8c"/></svg>
<svg class="r" style="left:128px;top:614px" width="14" height="14" viewBox="0 0 14 14"><circle cx="7" cy="7" r="7" fill="url(#dg)"/></svg>
<div class="t" style="left:167px;top:604.2px;font:400 31px/31px 'Liberation Mono',monospace;transform:scaleX(0.8601);"><span style="color:#000096">entry</span></div>
<svg class="r" style="left:89px;top:651px" width="15" height="18" viewBox="0 0 15 18"><path d="M0 0L15 9 0 18z" fill="#8c8c8c"/></svg>
<svg class="r" style="left:128px;top:654px" width="14" height="14" viewBox="0 0 14 14"><circle cx="7" cy="7" r="7" fill="url(#dg)"/></svg>
<div class="t" style="left:167px;top:644.2px;font:400 31px/31px 'Liberation Mono',monospace;transform:scaleX(0.8601);"><span style="color:#000096">entry</span></div>
<svg class="r" style="left:89px;top:691px" width="15" height="18" viewBox="0 0 15 18"><path d="M0 0L15 9 0 18z" fill="#8c8c8c"/></svg>
<svg class="r" style="left:128px;top:694px" width="14" height="14" viewBox="0 0 14 14"><circle cx="7" cy="7" r="7" fill="url(#dg)"/></svg>
<div class="t" style="left:167px;top:684.2px;font:400 31px/31px 'Liberation Mono',monospace;transform:scaleX(0.8601);"><span style="color:#000096">entry</span></div>
<svg class="r" style="left:89px;top:731px" width="15" height="18" viewBox="0 0 15 18"><path d="M0 0L15 9 0 18z" fill="#8c8c8c"/></svg>
<svg class="r" style="left:128px;top:734px" width="14" height="14" viewBox="0 0 14 14"><circle cx="7" cy="7" r="7" fill="url(#dg)"/></svg>
<div class="t" style="left:167px;top:724.2px;font:400 31px/31px 'Liberation Mono',monospace;transform:scaleX(0.8601);"><span style="color:#000096">entry</span></div>
<svg class="r" style="left:89px;top:771px" width="15" height="18" viewBox="0 0 15 18"><path d="M0 0L15 9 0 18z" fill="#8c8c8c"/></svg>
<svg class="r" style="left:128px;top:774px" width="14" height="14" viewBox="0 0 14 14"><circle cx="7" cy="7" r="7" fill="url(#dg)"/></svg>
<div class="t" style="left:167px;top:764.2px;font:400 31px/31px 'Liberation Mono',monospace;transform:scaleX(0.8601);"><span style="color:#000096">entry</span></div>
<svg class="r" style="left:89px;top:811px" width="15" height="18" viewBox="0 0 15 18"><path d="M0 0L15 9 0 18z" fill="#8c8c8c"/></svg>
<svg class="r" style="left:128px;top:814px" width="14" height="14" viewBox="0 0 14 14"><circle cx="7" cy="7" r="7" fill="url(#dg)"/></svg>
<div class="t" style="left:167px;top:804.2px;font:400 31px/31px 'Liberation Mono',monospace;transform:scaleX(0.8601);"><span style="color:#000096">entry</span></div>
<svg class="r" style="left:89px;top:851px" width="15" height="18" viewBox="0 0 15 18"><path d="M0 0L15 9 0 18z" fill="#8c8c8c"/></svg>
<svg class="r" style="left:128px;top:854px" width="14" height="14" viewBox="0 0 14 14"><circle cx="7" cy="7" r="7" fill="url(#dg)"/></svg>
<div class="t" style="left:167px;top:844.2px;font:400 31px/31px 'Liberation Mono',monospace;transform:scaleX(0.8601);"><span style="color:#000096">entry</span></div>
<svg class="r" style="left:89px;top:891px" width="15" height="18" viewBox="0 0 15 18"><path d="M0 0L15 9 0 18z" fill="#8c8c8c"/></svg>
<svg class="r" style="left:128px;top:894px" width="14" height="14" viewBox="0 0 14 14"><circle cx="7" cy="7" r="7" fill="url(#dg)"/></svg>
<div class="t" style="left:167px;top:884.2px;font:400 31px/31px 'Liberation Mono',monospace;transform:scaleX(0.8601);"><span style="color:#000096">entry</span></div>
<svg class="r" style="left:89px;top:931px" width="15" height="18" viewBox="0 0 15 18"><path d="M0 0L15 9 0 18z" fill="#8c8c8c"/></svg>
<svg class="r" style="left:128px;top:934px" width="14" height="14" viewBox="0 0 14 14"><circle cx="7" cy="7" r="7" fill="url(#dg)"/></svg>
<div class="t" style="left:167px;top:924.2px;font:400 31px/31px 'Liberation Mono',monospace;transform:scaleX(0.8601);"><span style="color:#000096">entry</span></div>
<svg class="r" style="left:89px;top:971px" width="15" height="18" viewBox="0 0 15 18"><path d="M0 0L15 9 0 18z" fill="#8c8c8c"/></svg>
<svg class="r" style="left:128px;top:974px" width="14" height="14" viewBox="0 0 14 14"><circle cx="7" cy="7" r="7" fill="url(#dg)"/></svg>
<div class="t" style="left:167px;top:964.2px;font:400 31px/31px 'Liberation Mono',monospace;transform:scaleX(0.8601);"><span style="color:#000096">entry</span></div>
<svg class="r" style="left:89px;top:1011px" width="15" height="18" viewBox="0 0 15 18"><path d="M0 0L15 9 0 18z" fill="#8c8c8c"/></svg>
<svg class="r" style="left:128px;top:1014px" width="14" height="14" viewBox="0 0 14 14"><circle cx="7" cy="7" r="7" fill="url(#dg)"/></svg>
<div class="t" style="left:167px;top:1004.2px;font:400 31px/31px 'Liberation Mono',monospace;transform:scaleX(0.8601);"><span style="color:#000096">entry</span></div>
<svg class="r" style="left:89px;top:1051px" width="15" height="18" viewBox="0 0 15 18"><path d="M0 0L15 9 0 18z" fill="#8c8c8c"/></svg>
<svg class="r" style="left:128px;top:1054px" width="14" height="14" viewBox="0 0 14 14"><circle cx="7" cy="7" r="7" fill="url(#dg)"/></svg>
<div class="t" style="left:167px;top:1044.2px;font:400 31px/31px 'Liberation Mono',monospace;transform:scaleX(0.8601);"><span style="color:#000096">entry</span></div>
<svg class="r" style="left:89px;top:1091px" width="15" height="18" viewBox="0 0 15 18"><path d="M0 0L15 9 0 18z" fill="#8c8c8c"/></svg>
<svg class="r" style="left:128px;top:1094px" width="14" height="14" viewBox="0 0 14 14"><circle cx="7" cy="7" r="7" fill="url(#dg)"/></svg>
<div class="t" style="left:167px;top:1084.2px;font:400 31px/31px 'Liberation Mono',monospace;transform:scaleX(0.8601);"><span style="color:#000096">entry</span></div>
<svg class="r" style="left:89px;top:1131px" width="15" height="18" viewBox="0 0 15 18"><path d="M0 0L15 9 0 18z" fill="#8c8c8c"/></svg>
<svg class="r" style="left:128px;top:1134px" width="14" height="14" viewBox="0 0 14 14"><circle cx="7" cy="7" r="7" fill="url(#dg)"/></svg>
<div class="t" style="left:167px;top:1124.2px;font:400 31px/31px 'Liberation Mono',monospace;transform:scaleX(0.8601);"><span style="color:#000096">entry</span></div>
<svg class="r" style="left:89px;top:1171px" width="15" height="18" viewBox="0 0 15 18"><path d="M0 0L15 9 0 18z" fill="#8c8c8c"/></svg>
<svg class="r" style="left:128px;top:1174px" width="14" height="14" viewBox="0 0 14 14"><circle cx="7" cy="7" r="7" fill="url(#dg)"/></svg>
<div class="t" style="left:167px;top:1164.2px;font:400 31px/31px 'Liberation Mono',monospace;transform:scaleX(0.8601);"><span style="color:#000096">entry</span></div>
<svg class="r" style="left:89px;top:1211px" width="15" height="18" viewBox="0 0 15 18"><path d="M0 0L15 9 0 18z" fill="#8c8c8c"/></svg>
<svg class="r" style="left:128px;top:1214px" width="14" height="14" viewBox="0 0 14 14"><circle cx="7" cy="7" r="7" fill="url(#dg)"/></svg>
<div class="t" style="left:167px;top:1204.2px;font:400 31px/31px 'Liberation Mono',monospace;transform:scaleX(0.8601);"><span style="color:#000096">entry</span></div>
<svg class="r" style="left:89px;top:1251px" width="15" height="18" viewBox="0 0 15 18"><path d="M0 0L15 9 0 18z" fill="#8c8c8c"/></svg>
<svg class="r" style="left:128px;top:1254px" width="14" height="14" viewBox="0 0 14 14"><circle cx="7" cy="7" r="7" fill="url(#dg)"/></svg>
<div class="t" style="left:167px;top:1244.2px;font:400 31px/31px 'Liberation Mono',monospace;transform:scaleX(0.8601);"><span style="color:#000096">entry</span></div>
<svg class="r" style="left:89px;top:1291px" width="15" height="18" viewBox="0 0 15 18"><path d="M0 0L15 9 0 18z" fill="#8c8c8c"/></svg>
<svg class="r" style="left:128px;top:1294px" width="14" height="14" viewBox="0 0 14 14"><circle cx="7" cy="7" r="7" fill="url(#dg)"/></svg>
<div class="t" style="left:167px;top:1284.2px;font:400 31px/31px 'Liberation Mono',monospace;transform:scaleX(0.8601);"><span style="color:#000096">entry</span></div>
<svg class="r" style="left:89px;top:1331px" width="15" height="18" viewBox="0 0 15 18"><path d="M0 0L15 9 0 18z" fill="#8c8c8c"/></svg>
<svg class="r" style="left:128px;top:1334px" width="14" height="14" viewBox="0 0 14 14"><circle cx="7" cy="7" r="7" fill="url(#dg)"/></svg>
<div class="t" style="left:167px;top:1324.2px;font:400 31px/31px 'Liberation Mono',monospace;transform:scaleX(0.8601);"><span style="color:#000096">entry</span></div>
<svg class="r" style="left:89px;top:1371px" width="15" height="18" viewBox="0 0 15 18"><path d="M0 0L15 9 0 18z" fill="#8c8c8c"/></svg>
<svg class="r" style="left:128px;top:1374px" width="14" height="14" viewBox="0 0 14 14"><circle cx="7" cy="7" r="7" fill="url(#dg)"/></svg>
<div class="t" style="left:167px;top:1364.2px;font:400 31px/31px 'Liberation Mono',monospace;transform:scaleX(0.8601);"><span style="color:#000096">entry</span></div>
<svg class="r" style="left:89px;top:1411px" width="15" height="18" viewBox="0 0 15 18"><path d="M0 0L15 9 0 18z" fill="#8c8c8c"/></svg>
<svg class="r" style="left:128px;top:1414px" width="14" height="14" viewBox="0 0 14 14"><circle cx="7" cy="7" r="7" fill="url(#dg)"/></svg>
<div class="t" style="left:167px;top:1404.2px;font:400 31px/31px 'Liberation Mono',monospace;transform:scaleX(0.8601);"><span style="color:#000096">entry</span></div>
<svg class="r" style="left:89px;top:1451px" width="15" height="18" viewBox="0 0 15 18"><path d="M0 0L15 9 0 18z" fill="#8c8c8c"/></svg>
<svg class="r" style="left:128px;top:1454px" width="14" height="14" viewBox="0 0 14 14"><circle cx="7" cy="7" r="7" fill="url(#dg)"/></svg>
<div class="t" style="left:167px;top:1444.2px;font:400 31px/31px 'Liberation Mono',monospace;transform:scaleX(0.8601);"><span style="color:#000096">entry</span></div>
<svg class="r" style="left:89px;top:1491px" width="15" height="18" viewBox="0 0 15 18"><path d="M0 0L15 9 0 18z" fill="#8c8c8c"/></svg>
<svg class="r" style="left:128px;top:1494px" width="14" height="14" viewBox="0 0 14 14"><circle cx="7" cy="7" r="7" fill="url(#dg)"/></svg>
<div class="t" style="left:167px;top:1484.2px;font:400 31px/31px 'Liberation Mono',monospace;transform:scaleX(0.8601);"><span style="color:#000096">entry</span></div>
<svg class="r" style="left:89px;top:1531px" width="15" height="18" viewBox="0 0 15 18"><path d="M0 0L15 9 0 18z" fill="#8c8c8c"/></svg>
<svg class="r" style="left:128px;top:1534px" width="14" height="14" viewBox="0 0 14 14"><circle cx="7" cy="7" r="7" fill="url(#dg)"/></svg>
<div class="t" style="left:167px;top:1524.2px;font:400 31px/31px 'Liberation Mono',monospace;transform:scaleX(0.8601);"><span style="color:#000096">entry</span></div>
<div class="t" style="left:254px;top:1524.2px;font:400 31px/31px 'Liberation Mono',monospace;transform:scaleX(0.8601);"><span style="color:#993300">&quot;1&quot;</span></div>
<svg class="r" style="left:89px;top:1571px" width="15" height="18" viewBox="0 0 15 18"><path d="M0 0L15 9 0 18z" fill="#8c8c8c"/></svg>
<svg class="r" style="left:128px;top:1574px" width="14" height="14" viewBox="0 0 14 14"><circle cx="7" cy="7" r="7" fill="url(#dg)"/></svg>
<div class="t" style="left:167px;top:1564.2px;font:400 31px/31px 'Liberation Mono',monospace;transform:scaleX(0.8601);"><span style="color:#000096">entry</span></div>
<div class="t" style="left:264px;top:1564.2px;font:400 31px/31px 'Liberation Mono',monospace;transform:scaleX(0.8601);"><span style="color:#000000">...</span></div>
<svg class="r" style="left:89px;top:1611px" width="15" height="18" viewBox="0 0 15 18"><path d="M0 0L15 9 0 18z" fill="#8c8c8c"/></svg>
<svg class="r" style="left:128px;top:1614px" width="14" height="14" viewBox="0 0 14 14"><circle cx="7" cy="7" r="7" fill="url(#dg)"/></svg>
<div class="t" style="left:167px;top:1604.2px;font:400 31px/31px 'Liberation Mono',monospace;transform:scaleX(0.8601);"><span style="color:#000096">entry</span></div>
<div class="t" style="left:254px;top:1604.2px;font:400 31px/31px 'Liberation Mono',monospace;transform:scaleX(0.8601);"><span style="color:#993300">&quot;foreign&quot;</span></div>
</div>
<div class="r" style="left:646px;top:356px;width:30px;height:1614px;background:#fafafa;border-left:2px solid #e6e6e6"></div>
<div class="r" style="left:654px;top:358px;width:16px;height:682px;background:#c1c1c1;border-radius:8px"></div>
<div class="r" style="left:116px;top:1970px;width:560px;height:30px;background:#f8f8f8;border-top:1.5px solid #e8e8e8"></div>
<div class="r" style="left:118px;top:1978px;width:273px;height:15px;background:#c1c1c1;border-radius:8px"></div>
<div class="r" style="left:646px;top:1971px;width:30px;height:29px;background:#fff;"></div>
<div class="r" style="left:702px;top:262px;width:257px;height:42px;background:#c8e0f7;border:1.5px solid #b3d2ef;border-bottom:none;border-radius:7px 7px 0 0"></div>
<div class="r" style="left:712px;top:274px;width:12px;height:12px;background:#f52a12;border-radius:50%"></div>
<div class="t" style="left:733.0px;top:268.8px;font:700 23.2px/23.2px 'Liberation Sans',sans-serif;color:#111;transform:scaleX(1.0404);">TEI-combo.xml</div>
<svg class="r" style="left:930px;top:271px" width="19" height="19" viewBox="0 0 19 19"><path d="M2 2l15 15M17 2L2 17" stroke="#111" stroke-width="3.6"/></svg>
<svg class="r" style="left:2238px;top:268px" width="14" height="21" viewBox="0 0 14 21"><path d="M12 2L2 10.5 12 19z" fill="none" stroke="#111" stroke-width="2.6" stroke-linejoin="miter"/></svg>
<svg class="r" style="left:2273px;top:268px" width="14" height="21" viewBox="0 0 14 21"><path d="M2 2l10 8.5L2 19z" fill="none" stroke="#111" stroke-width="2.6"/></svg>
<svg class="r" style="left:2302px;top:269px" width="19" height="19" viewBox="0 0 19 19"><rect x="1.3" y="1.3" width="16.4" height="16.4" fill="none" stroke="#111" stroke-width="2.6"/><path d="M5 6h9M5 9.5h9M5 13h9" stroke="#111" stroke-width="1.8"/></svg>
<div class="r" style="left:686px;top:302px;width:1652px;height:1702px;background:#fff;border:2px solid #79abd9;box-shadow:inset 0 0 0 2px #a9cce9"></div>
<div class="r" style="left:690px;top:306px;width:1644px;height:47px;background:#fff;"></div>
<div class="r" style="left:690px;top:352px;width:1644px;height:2px;background:#b9d7f1;"></div>
<div class="r" style="left:958px;top:312px;width:80px;height:6px;background:#8ebcf0;"></div>
<div class="t" style="left:746.0px;top:321.8px;font:400 22px/22px 'Liberation Sans',sans-serif;color:#111;transform:scaleX(0.9058);">TEI</div>
<div class="t" style="left:810.0px;top:321.8px;font:400 22px/22px 'Liberation Sans',sans-serif;color:#111;transform:scaleX(1.1844);">text</div>
<div class="t" style="left:885.0px;top:321.8px;font:400 22px/22px 'Liberation Sans',sans-serif;color:#111;transform:scaleX(1.0900);">body</div>
<div class="t" style="left:970.0px;top:321.8px;font:400 22px/22px 'Liberation Sans',sans-serif;color:#111;transform:scaleX(1.1245);">entry</div>
<div class="r" style="left:690px;top:354px;width:28px;height:1553px;background:#ecf6fd;"></div>
<div class="r" style="left:718px;top:354px;width:20px;height:1553px;background:#fdf3f3;"></div>
<div class="r" style="left:840px;top:354px;width:2px;height:1553px;background:#b9d7f1;"></div>
<div class="clip" style="left:690px;top:354px;width:1587px;height:1553px">
<div class="t" style="left:99.4px;top:6.9px;font:400 24.4px/24.4px 'Liberation Sans',sans-serif;color:#111;">1</div>
<div class="t" style="left:153px;top:4.0px;font:400 31px/31px 'Liberation Mono',monospace;transform:scaleX(0.8601);"><span style="color:#8c1fc9">&lt;?xml version=&quot;1.0&quot; encoding=&quot;UTF-8&quot;?&gt;</span></div>
<div class="t" style="left:99.4px;top:44.9px;font:400 24.4px/24.4px 'Liberation Sans',sans-serif;color:#111;">2</div>
<div class="t" style="left:153px;top:42.0px;font:400 31px/31px 'Liberation Mono',monospace;transform:scaleX(0.8601);"><span style="color:#8c1fc9">&lt;?xml-model href=&quot;http://www.tei-c.org/release/xml/tei/custom/schema/relaxng/tei_all.rng&quot; type=&quot;application/xml&quot;</span></div>
<div class="t" style="left:99.4px;top:82.9px;font:400 24.4px/24.4px 'Liberation Sans',sans-serif;color:#111;">3</div>
<svg class="r" style="left:125px;top:86.60000000000002px" width="17" height="12" viewBox="0 0 17 12"><path d="M1.5 1.5h14L8.5 10z" fill="#fff" stroke="#2d8de6" stroke-width="2"/></svg>
<div class="t" style="left:153px;top:80.0px;font:400 31px/31px 'Liberation Mono',monospace;transform:scaleX(0.8601);"><span style="color:#8c1fc9">&lt;?xml-model href=&quot;http://www.tei-c.org/release/xml/tei/custom/schema/relaxng/tei_all.rng&quot; type=&quot;application/xml&quot;</span></div>
<div class="t" style="left:99.4px;top:120.9px;font:400 24.4px/24.4px 'Liberation Sans',sans-serif;color:#111;">4</div>
<div class="t" style="left:153px;top:118.0px;font:400 31px/31px 'Liberation Mono',monospace;transform:scaleX(0.8601);"><span style="color:#8c1fc9">   schematypens=&quot;http://purl.oclc.org/dsdl/schematron&quot;?&gt;</span></div>
<div class="t" style="left:99.4px;top:158.9px;font:400 24.4px/24.4px 'Liberation Sans',sans-serif;color:#111;">5</div>
<div class="t" style="left:153px;top:156.0px;font:400 31px/31px 'Liberation Mono',monospace;transform:scaleX(0.8601);"><span style="color:#8c1fc9">&lt;?xml-stylesheet type=&quot;text/xsl&quot; href=&quot;../XSLT/XSLTExample.xsl&quot;?&gt;</span></div>
<div class="t" style="left:99.4px;top:196.9px;font:400 24.4px/24.4px 'Liberation Sans',sans-serif;color:#111;">6</div>
<svg class="r" style="left:125px;top:200.60000000000002px" width="17" height="12" viewBox="0 0 17 12"><path d="M1.5 1.5h14L8.5 10z" fill="#fff" stroke="#2d8de6" stroke-width="2"/></svg>
<div class="t" style="left:153px;top:194.0px;font:400 31px/31px 'Liberation Mono',monospace;transform:scaleX(0.8601);"><span style="color:#000096">&lt;TEI </span><span style="color:#f5683a">xmlns=</span><span style="color:#993300">&quot;http://www.tei-c.org/ns/1.0&quot;</span><span style="color:#000096">&gt;</span></div>
<div class="t" style="left:99.4px;top:234.9px;font:400 24.4px/24.4px 'Liberation Sans',sans-serif;color:#111;">7</div>
<svg class="r" style="left:125px;top:238.60000000000002px" width="17" height="12" viewBox="0 0 17 12"><path d="M1.5 1.5h14L8.5 10z" fill="#fff" stroke="#2d8de6" stroke-width="2"/></svg>
<div class="t" style="left:153px;top:232.0px;font:400 31px/31px 'Liberation Mono',monospace;transform:scaleX(0.8601);"><span style="color:#000000">   </span><span style="color:#000096">&lt;teiHeader&gt;</span></div>
<div class="t" style="left:99.4px;top:272.9px;font:400 24.4px/24.4px 'Liberation Sans',sans-serif;color:#111;">8</div>
<svg class="r" style="left:125px;top:276.6px" width="17" height="12" viewBox="0 0 17 12"><path d="M1.5 1.5h14L8.5 10z" fill="#fff" stroke="#2d8de6" stroke-width="2"/></svg>
<div class="t" style="left:153px;top:270.0px;font:400 31px/31px 'Liberation Mono',monospace;transform:scaleX(0.8601);"><span style="color:#000000">      </span><span style="color:#000096">&lt;fileDesc&gt;</span></div>
<div class="t" style="left:99.4px;top:310.9px;font:400 24.4px/24.4px 'Liberation Sans',sans-serif;color:#111;">9</div>
<svg class="r" style="left:125px;top:314.6px" width="17" height="12" viewBox="0 0 17 12"><path d="M1.5 1.5h14L8.5 10z" fill="#fff" stroke="#2d8de6" stroke-width="2"/></svg>
<div class="t" style="left:153px;top:308.0px;font:400 31px/31px 'Liberation Mono',monospace;transform:scaleX(0.8601);"><span style="color:#000000">         </span><span style="color:#000096">&lt;titleStmt&gt;</span></div>
<div class="t" style="left:85.9px;top:348.9px;font:400 24.4px/24.4px 'Liberation Sans',sans-serif;color:#8e8e8e;">10</div>
<div class="t" style="left:153px;top:346.0px;font:400 31px/31px 'Liberation Mono',monospace;transform:scaleX(0.8601);"><span style="color:#000000">            </span><span style="color:#000096">&lt;title&gt;</span><span style="color:#000000">Dictionary samples from the TEI guidelines</span><span style="color:#000096">&lt;/title&gt;</span></div>
<div class="t" style="left:87.7px;top:386.9px;font:400 24.4px/24.4px 'Liberation Sans',sans-serif;color:#111;">11</div>
<div class="t" style="left:153px;top:384.0px;font:400 31px/31px 'Liberation Mono',monospace;transform:scaleX(0.8601);"><span style="color:#000000">         </span><span style="color:#000096">&lt;/titleStmt&gt;</span></div>
<div class="t" style="left:85.9px;top:424.9px;font:400 24.4px/24.4px 'Liberation Sans',sans-serif;color:#111;">12</div>
<svg class="r" style="left:125px;top:428.6px" width="17" height="12" viewBox="0 0 17 12"><path d="M1.5 1.5h14L8.5 10z" fill="#fff" stroke="#2d8de6" stroke-width="2"/></svg>
<div class="t" style="left:153px;top:422.0px;font:400 31px/31px 'Liberation Mono',monospace;transform:scaleX(0.8601);"><span style="color:#000000">         </span><span style="color:#000096">&lt;publicationStmt&gt;</span></div>
<div class="t" style="left:85.9px;top:462.9px;font:400 24.4px/24.4px 'Liberation Sans',sans-serif;color:#111;">13</div>
<div class="t" style="left:153px;top:460.0px;font:400 31px/31px 'Liberation Mono',monospace;transform:scaleX(0.8601);"><span style="color:#000000">            </span><span style="color:#000096">&lt;p&gt;</span><span style="color:#000000">Publication Information</span><span style="color:#000096">&lt;/p&gt;</span></div>
<div class="t" style="left:85.9px;top:500.9px;font:400 24.4px/24.4px 'Liberation Sans',sans-serif;color:#111;">14</div>
<div class="t" style="left:153px;top:498.0px;font:400 31px/31px 'Liberation Mono',monospace;transform:scaleX(0.8601);"><span style="color:#000000">         </span><span style="color:#000096">&lt;/publicationStmt&gt;</span></div>
<div class="t" style="left:85.9px;top:538.9px;font:400 24.4px/24.4px 'Liberation Sans',sans-serif;color:#111;">15</div>
<svg class="r" style="left:125px;top:542.6px" width="17" height="12" viewBox="0 0 17 12"><path d="M1.5 1.5h14L8.5 10z" fill="#fff" stroke="#2d8de6" stroke-width="2"/></svg>
<div class="t" style="left:153px;top:536.0px;font:400 31px/31px 'Liberation Mono',monospace;transform:scaleX(0.8601);"><span style="color:#000000">         </span><span style="color:#000096">&lt;sourceDesc&gt;</span></div>
<div class="t" style="left:85.9px;top:576.9px;font:400 24.4px/24.4px 'Liberation Sans',sans-serif;color:#111;">16</div>
<div class="t" style="left:153px;top:574.0px;font:400 31px/31px 'Liberation Mono',monospace;transform:scaleX(0.8601);"><span style="color:#000000">            </span><span style="color:#000096">&lt;p&gt;</span><span style="color:#000000">Information about the source</span><span style="color:#000096">&lt;/p&gt;</span></div>
<div class="t" style="left:85.9px;top:614.9px;font:400 24.4px/24.4px 'Liberation Sans',sans-serif;color:#111;">17</div>
<div class="t" style="left:153px;top:612.0px;font:400 31px/31px 'Liberation Mono',monospace;transform:scaleX(0.8601);"><span style="color:#000000">         </span><span style="color:#000096">&lt;/sourceDesc&gt;</span></div>
<div class="t" style="left:85.9px;top:652.9px;font:400 24.4px/24.4px 'Liberation Sans',sans-serif;color:#111;">18</div>
<div class="t" style="left:153px;top:650.0px;font:400 31px/31px 'Liberation Mono',monospace;transform:scaleX(0.8601);"><span style="color:#000000">      </span><span style="color:#000096">&lt;/fileDesc&gt;</span></div>
<div class="t" style="left:85.9px;top:690.9px;font:400 24.4px/24.4px 'Liberation Sans',sans-serif;color:#111;">19</div>
<div class="t" style="left:153px;top:688.0px;font:400 31px/31px 'Liberation Mono',monospace;transform:scaleX(0.8601);"><span style="color:#000000">   </span><span style="color:#000096">&lt;/teiHeader&gt;</span></div>
<div class="t" style="left:85.9px;top:728.9px;font:400 24.4px/24.4px 'Liberation Sans',sans-serif;color:#8e8e8e;">20</div>
<svg class="r" style="left:125px;top:732.5999999999999px" width="17" height="12" viewBox="0 0 17 12"><path d="M1.5 1.5h14L8.5 10z" fill="#fff" stroke="#2d8de6" stroke-width="2"/></svg>
<div class="t" style="left:153px;top:726.0px;font:400 31px/31px 'Liberation Mono',monospace;transform:scaleX(0.8601);"><span style="color:#000000">   </span><span style="color:#000096">&lt;text&gt;</span></div>
<div class="t" style="left:85.9px;top:766.9px;font:400 24.4px/24.4px 'Liberation Sans',sans-serif;color:#111;">21</div>
<svg class="r" style="left:125px;top:770.5999999999999px" width="17" height="12" viewBox="0 0 17 12"><path d="M1.5 1.5h14L8.5 10z" fill="#fff" stroke="#2d8de6" stroke-width="2"/></svg>
<div class="t" style="left:153px;top:764.0px;font:400 31px/31px 'Liberation Mono',monospace;transform:scaleX(0.8601);"><span style="color:#000000">      </span><span style="color:#000096">&lt;body&gt;</span></div>
<div class="t" style="left:85.9px;top:804.9px;font:400 24.4px/24.4px 'Liberation Sans',sans-serif;color:#111;">22</div>
<svg class="r" style="left:125px;top:808.5999999999999px" width="17" height="12" viewBox="0 0 17 12"><path d="M1.5 1.5h14L8.5 10z" fill="#fff" stroke="#2d8de6" stroke-width="2"/></svg>
<div class="t" style="left:153px;top:802.0px;font:400 31px/31px 'Liberation Mono',monospace;transform:scaleX(0.8601);"><span style="color:#000000">         </span><span style="color:#000096">&lt;entry&gt;</span></div>
<div class="t" style="left:85.9px;top:842.9px;font:400 24.4px/24.4px 'Liberation Sans',sans-serif;color:#111;">23</div>
<svg class="r" style="left:125px;top:846.5999999999999px" width="17" height="12" viewBox="0 0 17 12"><path d="M1.5 1.5h14L8.5 10z" fill="#fff" stroke="#2d8de6" stroke-width="2"/></svg>
<div class="t" style="left:153px;top:840.0px;font:400 31px/31px 'Liberation Mono',monospace;transform:scaleX(0.8601);"><span style="color:#000000">            </span><span style="color:#000096">&lt;form&gt;</span></div>
<div class="t" style="left:85.9px;top:880.9px;font:400 24.4px/24.4px 'Liberation Sans',sans-serif;color:#111;">24</div>
<div class="t" style="left:153px;top:878.0px;font:400 31px/31px 'Liberation Mono',monospace;transform:scaleX(0.8601);"><span style="color:#000000">               </span><span style="color:#000096">&lt;orth&gt;</span><span style="color:#000000">competitor</span><span style="color:#000096">&lt;/orth&gt;</span></div>
<div class="t" style="left:85.9px;top:918.9px;font:400 24.4px/24.4px 'Liberation Sans',sans-serif;color:#111;">25</div>
<div class="t" style="left:153px;top:916.0px;font:400 31px/31px 'Liberation Mono',monospace;transform:scaleX(0.8601);"><span style="color:#000000">               </span><span style="color:#000096">&lt;hyph&gt;</span><span style="color:#000000">com|peti|tor</span><span style="color:#000096">&lt;/hyph&gt;</span></div>
<div class="t" style="left:85.9px;top:956.9px;font:400 24.4px/24.4px 'Liberation Sans',sans-serif;color:#111;">26</div>
<div class="t" style="left:153px;top:954.0px;font:400 31px/31px 'Liberation Mono',monospace;transform:scaleX(0.8601);"><span style="color:#000000">               </span><span style="color:#000096">&lt;pron&gt;</span><span style="color:#000000">k@m&quot;petit@(r)</span><span style="color:#000096">&lt;/pron&gt;</span></div>
<div class="t" style="left:85.9px;top:994.9px;font:400 24.4px/24.4px 'Liberation Sans',sans-serif;color:#111;">27</div>
<div class="t" style="left:153px;top:992.0px;font:400 31px/31px 'Liberation Mono',monospace;transform:scaleX(0.8601);"><span style="color:#000000">            </span><span style="color:#000096">&lt;/form&gt;</span></div>
<div class="t" style="left:85.9px;top:1032.9px;font:400 24.4px/24.4px 'Liberation Sans',sans-serif;color:#111;">28</div>
<svg class="r" style="left:125px;top:1036.6px" width="17" height="12" viewBox="0 0 17 12"><path d="M1.5 1.5h14L8.5 10z" fill="#fff" stroke="#2d8de6" stroke-width="2"/></svg>
<div class="t" style="left:153px;top:1030.0px;font:400 31px/31px 'Liberation Mono',monospace;transform:scaleX(0.8601);"><span style="color:#000000">            </span><span style="color:#000096">&lt;gramGrp&gt;</span></div>
<div class="t" style="left:85.9px;top:1070.9px;font:400 24.4px/24.4px 'Liberation Sans',sans-serif;color:#111;">29</div>
<div class="t" style="left:153px;top:1068.0px;font:400 31px/31px 'Liberation Mono',monospace;transform:scaleX(0.8601);"><span style="color:#000000">               </span><span style="color:#000096">&lt;pos&gt;</span><span style="color:#000000">n</span><span style="color:#000096">&lt;/pos&gt;</span></div>
<div class="t" style="left:85.9px;top:1108.9px;font:400 24.4px/24.4px 'Liberation Sans',sans-serif;color:#8e8e8e;">30</div>
<div class="t" style="left:153px;top:1106.0px;font:400 31px/31px 'Liberation Mono',monospace;transform:scaleX(0.8601);"><span style="color:#000000">            </span><span style="color:#000096">&lt;/gramGrp&gt;</span></div>
<div class="t" style="left:85.9px;top:1146.9px;font:400 24.4px/24.4px 'Liberation Sans',sans-serif;color:#111;">31</div>
<div class="t" style="left:153px;top:1144.0px;font:400 31px/31px 'Liberation Mono',monospace;transform:scaleX(0.8601);"><span style="color:#000000">            </span><span style="color:#000096">&lt;def&gt;</span><span style="color:#000000">person who competes.</span><span style="color:#000096">&lt;/def&gt;</span></div>
<div class="t" style="left:85.9px;top:1184.9px;font:400 24.4px/24.4px 'Liberation Sans',sans-serif;color:#111;">32</div>
<div class="t" style="left:153px;top:1182.0px;font:400 31px/31px 'Liberation Mono',monospace;transform:scaleX(0.8601);"><span style="color:#000000">         </span><span style="color:#000096">&lt;/entry&gt;</span></div>
<div class="t" style="left:85.9px;top:1222.9px;font:400 24.4px/24.4px 'Liberation Sans',sans-serif;color:#111;">33</div>
<svg class="r" style="left:125px;top:1226.6px" width="17" height="12" viewBox="0 0 17 12"><path d="M1.5 1.5h14L8.5 10z" fill="#fff" stroke="#2d8de6" stroke-width="2"/></svg>
<div class="t" style="left:153px;top:1220.0px;font:400 31px/31px 'Liberation Mono',monospace;transform:scaleX(0.8601);"><span style="color:#000000">         </span><span style="color:#000096">&lt;entry&gt;</span></div>
<div class="t" style="left:85.9px;top:1260.9px;font:400 24.4px/24.4px 'Liberation Sans',sans-serif;color:#111;">34</div>
<svg class="r" style="left:125px;top:1264.6px" width="17" height="12" viewBox="0 0 17 12"><path d="M1.5 1.5h14L8.5 10z" fill="#fff" stroke="#2d8de6" stroke-width="2"/></svg>
<div class="t" style="left:153px;top:1258.0px;font:400 31px/31px 'Liberation Mono',monospace;transform:scaleX(0.8601);"><span style="color:#000000">            </span><span style="color:#000096">&lt;form&gt;</span></div>
<div class="t" style="left:85.9px;top:1298.9px;font:400 24.4px/24.4px 'Liberation Sans',sans-serif;color:#111;">35</div>
<div class="t" style="left:153px;top:1296.0px;font:400 31px/31px 'Liberation Mono',monospace;transform:scaleX(0.8601);"><span style="color:#000000">               </span><span style="color:#000096">&lt;orth&gt;</span><span style="color:#000000">disproof</span><span style="color:#000096">&lt;/orth&gt;</span></div>
<div class="t" style="left:85.9px;top:1336.9px;font:400 24.4px/24.4px 'Liberation Sans',sans-serif;color:#111;">36</div>
<div class="t" style="left:153px;top:1334.0px;font:400 31px/31px 'Liberation Mono',monospace;transform:scaleX(0.8601);"><span style="color:#000000">               </span><span style="color:#000096">&lt;pron&gt;</span><span style="color:#000000">dIs&quot;pru:f</span><span style="color:#000096">&lt;/pron&gt;</span></div>
<div class="t" style="left:85.9px;top:1374.9px;font:400 24.4px/24.4px 'Liberation Sans',sans-serif;color:#111;">37</div>
<div class="t" style="left:153px;top:1372.0px;font:400 31px/31px 'Liberation Mono',monospace;transform:scaleX(0.8601);"><span style="color:#000000">            </span><span style="color:#000096">&lt;/form&gt;</span></div>
<div class="t" style="left:85.9px;top:1412.9px;font:400 24.4px/24.4px 'Liberation Sans',sans-serif;color:#111;">38</div>
<svg class="r" style="left:125px;top:1416.6px" width="17" height="12" viewBox="0 0 17 12"><path d="M1.5 1.5h14L8.5 10z" fill="#fff" stroke="#2d8de6" stroke-width="2"/></svg>
<div class="t" style="left:153px;top:1410.0px;font:400 31px/31px 'Liberation Mono',monospace;transform:scaleX(0.8601);"><span style="color:#000000">            </span><span style="color:#000096">&lt;gramGrp&gt;</span></div>
<div class="t" style="left:85.9px;top:1450.9px;font:400 24.4px/24.4px 'Liberation Sans',sans-serif;color:#111;">39</div>
<div class="t" style="left:153px;top:1448.0px;font:400 31px/31px 'Liberation Mono',monospace;transform:scaleX(0.8601);"><span style="color:#000000">               </span><span style="color:#000096">&lt;pos&gt;</span><span style="color:#000000">n</span><span style="color:#000096">&lt;/pos&gt;</span></div>
<div class="t" style="left:85.9px;top:1488.9px;font:400 24.4px/24.4px 'Liberation Sans',sans-serif;color:#8e8e8e;">40</div>
<div class="t" style="left:153px;top:1486.0px;font:400 31px/31px 'Liberation Mono',monospace;transform:scaleX(0.8601);"><span style="color:#000000">            </span><span style="color:#000096">&lt;/gramGrp&gt;</span></div>
<div class="t" style="left:85.9px;top:1526.9px;font:400 24.4px/24.4px 'Liberation Sans',sans-serif;color:#111;">41</div>
<svg class="r" style="left:125px;top:1530.6px" width="17" height="12" viewBox="0 0 17 12"><path d="M1.5 1.5h14L8.5 10z" fill="#fff" stroke="#2d8de6" stroke-width="2"/></svg>
<div class="t" style="left:153px;top:1524.0px;font:400 31px/31px 'Liberation Mono',monospace;transform:scaleX(0.8601);"><span style="color:#000000">            </span><span style="color:#000096">&lt;sense </span><span style="color:#f5683a">n=</span><span style="color:#993300">&quot;1&quot;</span><span style="color:#000096">&gt;</span></div>
</div>
<div class="r" style="left:2277px;top:354px;width:27px;height:1553px;background:#f8f8f8;border-left:1.5px solid #e8e8e8"></div>
<div class="r" style="left:2284px;top:356px;width:16px;height:44px;background:#c1c1c1;border-radius:8px"></div>
<div class="r" style="left:2303px;top:354px;width:31px;height:1646px;background:#eeeeee;"></div>
<div class="r" style="left:2309px;top:355px;width:22px;height:22px;background:#1c9a10;"></div>
<svg class="r" style="left:2310px;top:1858px" width="24" height="24" viewBox="0 0 24 24"><path d="M3 3l18 18M21 3L3 21" stroke="#2d8de6" stroke-width="4"/><path d="M3 3l18 18M21 3L3 21" stroke="#a7cdf5" stroke-width="1.5"/></svg>
<svg class="r" style="left:2309px;top:1894px" width="24" height="14" viewBox="0 0 24 14"><path d="M1.5 12.5L12 2l10.5 10.5z" fill="#a7cdf5" stroke="#2d8de6" stroke-width="2.2"/></svg>
<svg class="r" style="left:2309px;top:1922px" width="24" height="14" viewBox="0 0 24 14"><path d="M1.5 1.5L12 12l10.5-10.5z" fill="#a7cdf5" stroke="#2d8de6" stroke-width="2.2"/></svg>
<div class="r" style="left:690px;top:1907px;width:152px;height:30px;background:#fff;"></div>
<div class="r" style="left:842px;top:1907px;width:1435px;height:30px;background:#f8f8f8;border-top:1.5px solid #e8e8e8"></div>
<div class="r" style="left:844px;top:1916px;width:604px;height:16px;background:#c1c1c1;border-radius:8px"></div>
<div class="r" style="left:2276px;top:1907px;width:28px;height:30px;background:#fff;"></div>
<div class="r" style="left:690px;top:1937px;width:1613px;height:63px;background:#eeeeee;"></div>
<div class="r" style="left:1320px;top:1952px;width:376px;height:35px;background:#fff;border:1px solid #c6c6c6;border-radius:6px"></div>
<div class="r" style="left:1320px;top:1952px;width:128px;height:35px;background:linear-gradient(#2f9bff,#0a7cf8);border-radius:6px 0 0 6px"></div>
<div class="r" style="left:1576px;top:1953px;width:1px;height:33px;background:#d0d0d0;"></div>
<div class="r" style="left:1448px;top:1953px;width:1px;height:33px;background:#d0d0d0;"></div>
<div class="t" style="left:1360.5px;top:1957.5px;font:400 23px/23px 'Liberation Sans',sans-serif;color:#fff;transform:scaleX(1.1142);">Text</div>
<div class="t" style="left:1489.5px;top:1957.5px;font:400 23px/23px 'Liberation Sans',sans-serif;color:#111;transform:scaleX(1.0356);">Grid</div>
<div class="t" style="left:1598.5px;top:1957.5px;font:400 23px/23px 'Liberation Sans',sans-serif;color:#111;transform:scaleX(1.1067);">Author</div>
<div class="r" style="left:2346px;top:256px;width:504px;height:720px;background:#fff;border:2px solid #b9d7f1"></div>
<div class="r" style="left:2348px;top:258px;width:500px;height:32px;background:linear-gradient(#e6e6e6,#d2d2d2);"></div>
<div class="r" style="left:2373px;top:263px;width:22px;height:22px;background:#e0e0e0;border-radius:50%;border:1.5px solid #cdcdcd"></div>
<div class="r" style="left:2407px;top:263px;width:22px;height:22px;background:#e0e0e0;border-radius:50%;border:1.5px solid #cdcdcd"></div>
<div class="r" style="left:2441px;top:263px;width:22px;height:22px;background:#e0e0e0;border-radius:50%;border:1.5px solid #cdcdcd"></div>
<div class="t" style="left:2550.0px;top:264.1px;font:400 22.5px/22.5px 'Liberation Sans',sans-serif;color:#111;transform:scaleX(1.1153);">Attributes</div>
<div class="r" style="left:2348px;top:290px;width:500px;height:48px;background:#eeeeee;"></div>
<div class="r" style="left:2348px;top:338px;width:500px;height:2px;background:#b9d7f1;"></div>
<div class="t" style="left:2353.0px;top:300.6px;font:400 27px/27px 'Liberation Sans',sans-serif;color:#111;transform:scaleX(1.0329);">entry</div>
<div class="t" style="left:2424.0px;top:300.6px;font:400 27px/27px 'Liberation Sans',sans-serif;color:#8a8a8a;transform:scaleX(1.1700);">[http://www.tei-c.org/ns/1.0]</div>
<svg class="r" style="left:2824px;top:306px" width="14" height="19" viewBox="0 0 14 19"><path d="M1 1l12 8.5L1 18z" fill="#1b72c0"/></svg>
<div class="r" style="left:2348px;top:340px;width:470px;height:30px;background:#f1f1f1;"></div>
<div class="r" style="left:2582px;top:344px;width:2px;height:24px;background:#dadada;"></div>
<div class="r" style="left:2816px;top:344px;width:2px;height:24px;background:#dadada;"></div>
<div class="t" style="left:2354.0px;top:342.9px;font:400 22.2px/22.2px 'Liberation Sans',sans-serif;color:#111;transform:scaleX(1.1490);">Attribute</div>
<div class="t" style="left:2590.0px;top:342.9px;font:400 22.2px/22.2px 'Liberation Sans',sans-serif;color:#111;transform:scaleX(1.0338);">Value</div>
<div class="t" style="left:2351px;top:376.4px;font:400 31px/31px 'Liberation Mono',monospace;transform:scaleX(0.8601);"><span style="color:#000000">ana</span></div>
<div class="r" style="left:2348px;top:412px;width:468px;height:38px;background:#ebf1fc;"></div>
<div class="t" style="left:2351px;top:416.4px;font:400 31px/31px 'Liberation Mono',monospace;transform:scaleX(0.8601);"><span style="color:#000000">cert</span></div>
<div class="t" style="left:2351px;top:456.4px;font:400 31px/31px 'Liberation Mono',monospace;transform:scaleX(0.8601);"><span style="color:#000000">change</span></div>
<div class="r" style="left:2348px;top:492px;width:468px;height:38px;background:#ebf1fc;"></div>
<div class="t" style="left:2351px;top:496.4px;font:400 31px/31px 'Liberation Mono',monospace;transform:scaleX(0.8601);"><span style="color:#000000">copyOf</span></div>
<div class="t" style="left:2351px;top:536.4px;font:400 31px/31px 'Liberation Mono',monospace;transform:scaleX(0.8601);"><span style="color:#000000">corresp</span></div>
<div class="r" style="left:2348px;top:572px;width:468px;height:38px;background:#ebf1fc;"></div>
<div class="t" style="left:2351px;top:576.4px;font:400 31px/31px 'Liberation Mono',monospace;transform:scaleX(0.8601);"><span style="color:#000000">exclude</span></div>
<div class="t" style="left:2351px;top:616.4px;font:400 31px/31px 'Liberation Mono',monospace;transform:scaleX(0.8601);"><span style="color:#000000">facs</span></div>
<div class="r" style="left:2348px;top:652px;width:468px;height:38px;background:#ebf1fc;"></div>
<div class="t" style="left:2351px;top:656.4px;font:400 31px/31px 'Liberation Mono',monospace;transform:scaleX(0.8601);"><span style="color:#000000">n</span></div>
<div class="t" style="left:2351px;top:696.4px;font:400 31px/31px 'Liberation Mono',monospace;transform:scaleX(0.8601);"><span style="color:#000000">next</span></div>
<div class="r" style="left:2348px;top:732px;width:468px;height:38px;background:#ebf1fc;"></div>
<div class="t" style="left:2351px;top:736.4px;font:400 31px/31px 'Liberation Mono',monospace;transform:scaleX(0.8601);"><span style="color:#000000">prev</span></div>
<div class="t" style="left:2351px;top:776.4px;font:400 31px/31px 'Liberation Mono',monospace;transform:scaleX(0.8601);"><span style="color:#000000">rend</span></div>
<div class="r" style="left:2348px;top:812px;width:468px;height:38px;background:#ebf1fc;"></div>
<div class="t" style="left:2351px;top:816.4px;font:400 31px/31px 'Liberation Mono',monospace;transform:scaleX(0.8601);"><span style="color:#000000">rendition</span></div>
<div class="t" style="left:2351px;top:856.4px;font:400 31px/31px 'Liberation Mono',monospace;transform:scaleX(0.8601);"><span style="color:#000000">resp</span></div>
<div class="r" style="left:2348px;top:892px;width:468px;height:38px;background:#ebf1fc;"></div>
<div class="t" style="left:2351px;top:896.4px;font:400 31px/31px 'Liberation Mono',monospace;transform:scaleX(0.8601);"><span style="color:#000000">sameAs</span></div>
<div class="t" style="left:2351px;top:936.4px;font:400 31px/31px 'Liberation Mono',monospace;transform:scaleX(0.8601);"><span style="color:#000000">select</span></div>
<div class="r" style="left:2582px;top:372px;width:2px;height:602px;background:#e8e8e8;"></div>
<div class="r" style="left:2816px;top:372px;width:2px;height:602px;background:#e8e8e8;"></div>
<div class="r" style="left:2818px;top:370px;width:30px;height:604px;background:#fafafa;"></div>
<div class="r" style="left:2826px;top:374px;width:16px;height:371px;background:#c1c1c1;border-radius:8px"></div>
<div class="r" style="left:2354px;top:975px;width:171px;height:44px;background:#eeeeee;border:1.5px solid #b9d7f1;border-top:none;border-radius:0 0 7px 7px"></div>
<svg class="r" style="left:2366px;top:986px" width="30" height="28" viewBox="0 0 30 28"><g transform="skewX(-14)"><ellipse cx="13" cy="13.5" rx="6.3" ry="8" fill="none" stroke="#f0321e" stroke-width="4.6"/><path d="M22 4.5v14.5q0 3 3 1" fill="none" stroke="#f0321e" stroke-width="4"/></g></svg>
<div class="t" style="left:2407.0px;top:988.5px;font:700 22.4px/22.4px 'Liberation Sans',sans-serif;color:#111;transform:scaleX(1.0304);">Attributes</div>
<svg class="r" style="left:2538px;top:984px" width="28" height="32" viewBox="0 0 28 32"><path d="M14 4v26M14 14h8M14 25h8M3 14h11" stroke="#888" stroke-width="2" fill="none"/><circle cx="14" cy="4" r="3.5" fill="#e8401c"/><circle cx="4" cy="14" r="3.5" fill="#e8401c"/><circle cx="23" cy="14" r="3.5" fill="#e8401c"/><circle cx="23" cy="25" r="3.5" fill="#e8401c"/></svg>
<div class="t" style="left:2576.0px;top:988.5px;font:400 22.4px/22.4px 'Liberation Sans',sans-serif;color:#111;transform:scaleX(1.0326);">Model</div>
<div class="r" style="left:2648px;top:984px;width:2px;height:34px;background:#bcd8f0;"></div>
<div class="r" style="left:2346px;top:1030px;width:504px;height:928px;background:#fff;border:2px solid #b9d7f1"></div>
<div class="r" style="left:2348px;top:1032px;width:500px;height:32px;background:linear-gradient(#e6e6e6,#d2d2d2);"></div>
<div class="r" style="left:2373px;top:1037px;width:22px;height:22px;background:#e0e0e0;border-radius:50%;border:1.5px solid #cdcdcd"></div>
<div class="r" style="left:2407px;top:1037px;width:22px;height:22px;background:#e0e0e0;border-radius:50%;border:1.5px solid #cdcdcd"></div>
<div class="r" style="left:2441px;top:1037px;width:22px;height:22px;background:#e0e0e0;border-radius:50%;border:1.5px solid #cdcdcd"></div>
<div class="t" style="left:2471.0px;top:1037.1px;font:400 22.5px/22.5px 'Liberation Sans',sans-serif;color:#111;transform:scaleX(1.0602);">Transformation Scenarios - TEI...</div>
<div class="r" style="left:2348px;top:1064px;width:500px;height:120px;background:#eeeeee;"></div>
<svg class="r" style="left:2355px;top:1071px" width="34" height="34" viewBox="0 0 34 34"><circle cx="17" cy="17" r="15.5" fill="#fff" stroke="#858585" stroke-width="2"/><path d="M11 7l17 10-17 10z" fill="#e0361a"/></svg>
<svg class="r" style="left:2399px;top:1071px" width="36" height="36" viewBox="0 0 36 36"><path d="M19 32.5A15.5 15.5 0 1 1 32.5 15" fill="#fff" stroke="#858585" stroke-width="2"/><path d="M10.5 7.5l15.5 9-15.5 9z" fill="#1b72c0"/><g transform="translate(25.5,28)"><circle cx="0" cy="-5.5" r="2.6" fill="#888"/><ellipse cx="0" cy="1" rx="5" ry="6" fill="#e0361a"/><path d="M0-4v11" stroke="#f58a6a" stroke-width="1"/><path d="M-3-8l-1-2M3-8l1-2M-5-3l-3-2M5-3l3-2M-5 6l-3 2M5 6l3 2" stroke="#777" stroke-width="1.2"/></g></svg>
<svg class="r" style="left:2446px;top:1069px" width="5" height="38" viewBox="0 0 5 38"><rect x="1" y="1.0" width="3" height="3" fill="#777"/><rect x="1" y="7.1" width="3" height="3" fill="#777"/><rect x="1" y="13.2" width="3" height="3" fill="#777"/><rect x="1" y="19.3" width="3" height="3" fill="#777"/><rect x="1" y="25.4" width="3" height="3" fill="#777"/><rect x="1" y="31.5" width="3" height="3" fill="#777"/></svg>
<svg class="r" style="left:2469px;top:1075px" width="24" height="24" viewBox="0 0 24 24"><path d="M12 1v22M1 12h22" stroke="#1b68b5" stroke-width="5"/></svg>
<svg class="r" style="left:2516px;top:1085px" width="12" height="8" viewBox="0 0 12 8"><path d="M0 0h11v2h-2l-3.5 4.5L2 2H0z" fill="#111"/></svg>
<svg class="r" style="left:2545px;top:1075px" width="25" height="25" viewBox="0 0 25 25"><path d="M3 22L13 12" stroke="#86a7c3" stroke-width="5" stroke-linecap="round"/><circle cx="16" cy="8" r="6.5" fill="#86a7c3"/><path d="M18 0l6 6-4 2-4-4z" fill="#eeeeee"/></svg>
<svg class="r" style="left:2585px;top:1071px" width="34" height="34" viewBox="0 0 34 34"><path d="M1 1h15l3 3v20H1z" fill="#e6e6e6" stroke="#aaa" stroke-width="1.8"/><path d="M9 8h16l8 8v17H9z" fill="#e6e6e6" stroke="#aaa" stroke-width="1.8"/><path d="M13 20h16M13 24h16M13 28h16" stroke="#86a7c3" stroke-width="2"/></svg>
<svg class="r" style="left:2635px;top:1076px" width="23" height="23" viewBox="0 0 23 23"><path d="M2 2l19 19M21 2L2 21" stroke="#86a7c3" stroke-width="4.5"/></svg>
<svg class="r" style="left:2807px;top:1073px" width="36" height="34" viewBox="0 0 36 34"><g fill="#1b68b5"><circle cx="13" cy="13" r="9"/><rect x="10.5" y="0.5" width="5" height="6" transform="rotate(0 13 13)"/><rect x="10.5" y="0.5" width="5" height="6" transform="rotate(45 13 13)"/><rect x="10.5" y="0.5" width="5" height="6" transform="rotate(90 13 13)"/><rect x="10.5" y="0.5" width="5" height="6" transform="rotate(135 13 13)"/><rect x="10.5" y="0.5" width="5" height="6" transform="rotate(180 13 13)"/><rect x="10.5" y="0.5" width="5" height="6" transform="rotate(225 13 13)"/><rect x="10.5" y="0.5" width="5" height="6" transform="rotate(270 13 13)"/><rect x="10.5" y="0.5" width="5" height="6" transform="rotate(315 13 13)"/></g><circle cx="13" cy="13" r="4" fill="#eeeeee"/><path d="M23 26h10l-5 5z" fill="#111"/></svg>
<div class="r" style="left:2357px;top:1125px;width:482px;height:42px;background:#fff;border:1.5px solid #a8a8a8;border-radius:7px"></div>
<svg class="r" style="left:2370px;top:1135px" width="26" height="26" viewBox="0 0 26 26"><circle cx="10" cy="10" r="8.5" fill="none" stroke="#3a3a3a" stroke-width="1.8"/><path d="M16 16l7.5 7.5" stroke="#3a3a3a" stroke-width="1.8"/></svg>
<div class="t" style="left:2400.0px;top:1136.9px;font:400 23.4px/23.4px 'Liberation Mono',monospace;color:#767676;transform:scaleX(0.9792);">Type filter text</div>
<div class="r" style="left:2348px;top:1184px;width:500px;height:30px;background:#f1f1f1;"></div>
<div class="r" style="left:2486px;top:1188px;width:2px;height:24px;background:#dadada;"></div>
<div class="t" style="left:2355.0px;top:1186.8px;font:400 22.2px/22.2px 'Liberation Sans',sans-serif;color:#111;transform:scaleX(1.0834);">Association</div>
<div class="t" style="left:2494.0px;top:1186.8px;font:400 22.2px/22.2px 'Liberation Sans',sans-serif;color:#111;transform:scaleX(1.0385);">Scenario</div>
<svg class="r" style="left:2356px;top:1228.3px" width="18" height="15" viewBox="0 0 18 15"><path d="M0 0h18L9 15z" fill="#8c8c8c"/></svg>
<div class="t" style="left:2391px;top:1221.7px;font:400 31px/31px 'Liberation Mono',monospace;transform:scaleX(0.8601);"><span style="color:#000000">TEI P5 (5)</span></div>
<div class="r" style="left:2561px;top:1233.3px;width:287px;height:2px;background:#dedede;"></div>
<div class="r" style="left:2434px;top:1263px;width:24px;height:24px;background:#fff;border:1.5px solid #b5b5b5;border-radius:5px;box-shadow:0 1px 1px #ddd"></div>
<svg class="r" style="left:2493px;top:1260px" width="17" height="26" viewBox="0 0 17 26"><circle cx="8.5" cy="7" r="6.5" fill="#f2b92e" stroke="#c9881a" stroke-width="1"/><circle cx="8.5" cy="4.5" r="1.5" fill="#fff"/><path d="M8.5 12v12M8.5 19h4M8.5 23h4" stroke="#b4670f" stroke-width="3"/></svg>
<div class="t" style="left:2522px;top:1260.4px;font:400 31px/31px 'Liberation Mono',monospace;transform:scaleX(0.8601);"><span style="color:#000000">TEI P5 XHTML</span></div>
<div class="r" style="left:2434px;top:1303px;width:24px;height:24px;background:#fff;border:1.5px solid #b5b5b5;border-radius:5px;box-shadow:0 1px 1px #ddd"></div>
<svg class="r" style="left:2493px;top:1300px" width="17" height="26" viewBox="0 0 17 26"><circle cx="8.5" cy="7" r="6.5" fill="#f2b92e" stroke="#c9881a" stroke-width="1"/><circle cx="8.5" cy="4.5" r="1.5" fill="#fff"/><path d="M8.5 12v12M8.5 19h4M8.5 23h4" stroke="#b4670f" stroke-width="3"/></svg>
<div class="t" style="left:2522px;top:1300.4px;font:400 31px/31px 'Liberation Mono',monospace;transform:scaleX(0.8601);"><span style="color:#000000">TEI P5 PDF</span></div>
<div class="r" style="left:2434px;top:1343px;width:24px;height:24px;background:#fff;border:1.5px solid #b5b5b5;border-radius:5px;box-shadow:0 1px 1px #ddd"></div>
<svg class="r" style="left:2493px;top:1340px" width="17" height="26" viewBox="0 0 17 26"><circle cx="8.5" cy="7" r="6.5" fill="#f2b92e" stroke="#c9881a" stroke-width="1"/><circle cx="8.5" cy="4.5" r="1.5" fill="#fff"/><path d="M8.5 12v12M8.5 19h4M8.5 23h4" stroke="#b4670f" stroke-width="3"/></svg>
<div class="t" style="left:2522px;top:1340.4px;font:400 31px/31px 'Liberation Mono',monospace;transform:scaleX(0.8601);"><span style="color:#000000">TEI P5 EPUB</span></div>
<div class="r" style="left:2434px;top:1383px;width:24px;height:24px;background:#fff;border:1.5px solid #b5b5b5;border-radius:5px;box-shadow:0 1px 1px #ddd"></div>
<svg class="r" style="left:2493px;top:1380px" width="17" height="26" viewBox="0 0 17 26"><circle cx="8.5" cy="7" r="6.5" fill="#f2b92e" stroke="#c9881a" stroke-width="1"/><circle cx="8.5" cy="4.5" r="1.5" fill="#fff"/><path d="M8.5 12v12M8.5 19h4M8.5 23h4" stroke="#b4670f" stroke-width="3"/></svg>
<div class="t" style="left:2522px;top:1380.4px;font:400 31px/31px 'Liberation Mono',monospace;transform:scaleX(0.8601);"><span style="color:#000000">TEI P5 DOCX</span></div>
<div class="r" style="left:2434px;top:1423px;width:24px;height:24px;background:#fff;border:1.5px solid #b5b5b5;border-radius:5px;box-shadow:0 1px 1px #ddd"></div>
<svg class="r" style="left:2493px;top:1420px" width="17" height="26" viewBox="0 0 17 26"><circle cx="8.5" cy="7" r="6.5" fill="#f2b92e" stroke="#c9881a" stroke-width="1"/><circle cx="8.5" cy="4.5" r="1.5" fill="#fff"/><path d="M8.5 12v12M8.5 19h4M8.5 23h4" stroke="#b4670f" stroke-width="3"/></svg>
<div class="t" style="left:2522px;top:1420.4px;font:400 31px/31px 'Liberation Mono',monospace;transform:scaleX(0.8601);"><span style="color:#000000">TEI P5 ODT</span></div>
<svg class="r" style="left:2356px;top:1469.4px" width="18" height="15" viewBox="0 0 18 15"><path d="M0 0h18L9 15z" fill="#8c8c8c"/></svg>
<div class="t" style="left:2391px;top:1462.8px;font:400 31px/31px 'Liberation Mono',monospace;transform:scaleX(0.8601);"><span style="color:#000000">Project (1)</span></div>
<div class="r" style="left:2577px;top:1474.4px;width:271px;height:2px;background:#dedede;"></div>
<div class="r" style="left:2434px;top:1502.7px;width:24px;height:24px;background:#fff;border:1.5px solid #b5b5b5;border-radius:5px;box-shadow:0 1px 1px #ddd"></div>
<svg class="r" style="left:2494px;top:1502px" width="24" height="22" viewBox="0 0 24 22"><rect x="0" y="0" width="24" height="22" rx="3" fill="#1a7fd8"/><rect x="3" y="6" width="18" height="12" fill="#cfe4f7"/><rect x="7" y="10" width="10" height="5" fill="#444"/><rect x="10" y="11" width="4" height="2" fill="#eee"/></svg>
<div class="t" style="left:2532px;top:1500.1px;font:400 31px/31px 'Liberation Mono',monospace;transform:scaleX(0.8601);"><span style="color:#000000">Current Utility</span></div>
<svg class="r" style="left:2356px;top:1548px" width="18" height="15" viewBox="0 0 18 15"><path d="M0 0h18L9 15z" fill="#8c8c8c"/></svg>
<div class="t" style="left:2391px;top:1541.4px;font:400 31px/31px 'Liberation Mono',monospace;transform:scaleX(0.8601);"><span style="color:#000000">Global (1)</span></div>
<div class="r" style="left:2561px;top:1553px;width:287px;height:2px;background:#dedede;"></div>
<div class="r" style="left:2434px;top:1583.9px;width:24px;height:24px;background:#1a82fb;border-radius:5px"></div>
<svg class="r" style="left:2438px;top:1587.9px" width="16" height="16" viewBox="0 0 16 16"><path d="M2 8l4 4.5L14 3" fill="none" stroke="#fff" stroke-width="2.6"/></svg>
<div class="clip" style="left:2348px;top:1570px;width:500px;height:60px">
<div class="t" style="left:175px;top:11.3px;font:400 31px/31px 'Liberation Mono',monospace;transform:scaleX(0.8601);"><span style="color:#000000">xml-stylesheet proc...</span></div>
</div>
<div class="r" style="left:2348px;top:1927px;width:500px;height:29px;background:#f8f8f8;border-top:1.5px solid #e8e8e8"></div>
<div class="r" style="left:2351px;top:1934px;width:352px;height:16px;background:#c1c1c1;border-radius:8px"></div>
<div class="r" style="left:2355px;top:1957px;width:160px;height:44px;background:#eeeeee;border:1.5px solid #b9d7f1;border-top:none;border-radius:0 0 7px 7px"></div>
<svg class="r" style="left:2363px;top:1966px" width="34" height="34" viewBox="0 0 34 34"><path d="M3 22L13 12" stroke="#808080" stroke-width="5" stroke-linecap="round"/><circle cx="16" cy="8" r="6.5" fill="#808080"/><path d="M18 0l6 6-4 2-4-4z" fill="#eeeeee"/><path d="M20 18l12 7-12 7z" fill="#e0361a"/></svg>
<div class="t" style="left:2405.0px;top:1971.0px;font:700 22.4px/22.4px 'Liberation Sans',sans-serif;color:#111;transform:scaleX(1.0543);">Transf..</div>
<svg class="r" style="left:2531px;top:1968px" width="28" height="28" viewBox="0 0 28 28"><rect x="0" y="0" width="12" height="12" fill="#f2b92e"/><rect x="14" y="14" width="12" height="12" fill="#f2b92e"/></svg>
<div class="t" style="left:2568.5px;top:1971.0px;font:400 22.4px/22.4px 'Liberation Sans',sans-serif;color:#111;transform:scaleX(1.0210);">Entities</div>
<div class="r" style="left:2652px;top:1967px;width:2px;height:33px;background:#bcd8f0;"></div>
<svg class="r" style="left:2666px;top:1974px" width="32" height="22" viewBox="0 0 32 22"><path d="M8 2L2 11l6 9M24 2l6 9-6 9" fill="none" stroke="#1b68b5" stroke-width="2.4"/><path d="M11 6l10 10M21 6L11 16" stroke="#1b68b5" stroke-width="2.6"/></svg>
<div class="t" style="left:2707.0px;top:1971.0px;font:400 22.4px/22.4px 'Liberation Sans',sans-serif;color:#111;transform:scaleX(0.9853);">Elements</div>
<div class="r" style="left:2810px;top:1967px;width:2px;height:33px;background:#bcd8f0;"></div>
<div class="r" style="left:112px;top:2008px;width:2740px;height:2px;background:#8a8a8a;"></div>
<div class="r" style="left:112px;top:2010px;width:2740px;height:44px;background:#eeeeee;"></div>
<div class="t" style="left:123.0px;top:2021.2px;font:400 25px/25px 'Liberation Sans',sans-serif;color:#111;transform:scaleX(1.1752);">/Users/.../Events/LexMC2017/Data/TEI-combo.xml</div>
<div class="r" style="left:967px;top:2014px;width:2px;height:34px;background:#cfcfcf;"></div>
<div class="r" style="left:989px;top:2021px;width:22px;height:22px;background:#1c9a10;"></div>
<div class="t" style="left:1019.0px;top:2020.8px;font:400 25px/25px 'Liberation Sans',sans-serif;color:#111;transform:scaleX(1.1618);">XPath - successful ( 0.0s )</div>
<div class="r" style="left:2061px;top:2014px;width:2px;height:34px;background:#cfcfcf;"></div>
<div class="t" style="left:2082.0px;top:2021.0px;font:400 25px/25px 'Liberation Sans',sans-serif;color:#111;transform:scaleX(1.1145);">U+003C</div>
<div class="r" style="left:2297px;top:2014px;width:2px;height:34px;background:#cfcfcf;"></div>
<div class="t" style="left:2320.0px;top:2021.2px;font:400 25px/25px 'Liberation Sans',sans-serif;color:#111;transform:scaleX(1.1178);">700 : 10</div>
<div class="r" style="left:2533px;top:2014px;width:2px;height:34px;background:#cfcfcf;"></div>
<div class="r" style="left:2795px;top:2014px;width:2px;height:34px;background:#cfcfcf;"></div>
<svg class="r" style="left:2819px;top:2019px" width="27" height="26" viewBox="0 0 27 26"><path d="M3 1.5h21a2 2 0 0 1 2 2v12a2 2 0 0 1-2 2H11l-5 6v-6H3a2 2 0 0 1-2-2v-12a2 2 0 0 1 2-2z" fill="#fff" stroke="#808080" stroke-width="2"/><path d="M5 6h16M5 9.5h16M5 13h8" stroke="#1b72c0" stroke-width="2"/></svg>
</div>
</body></html>
